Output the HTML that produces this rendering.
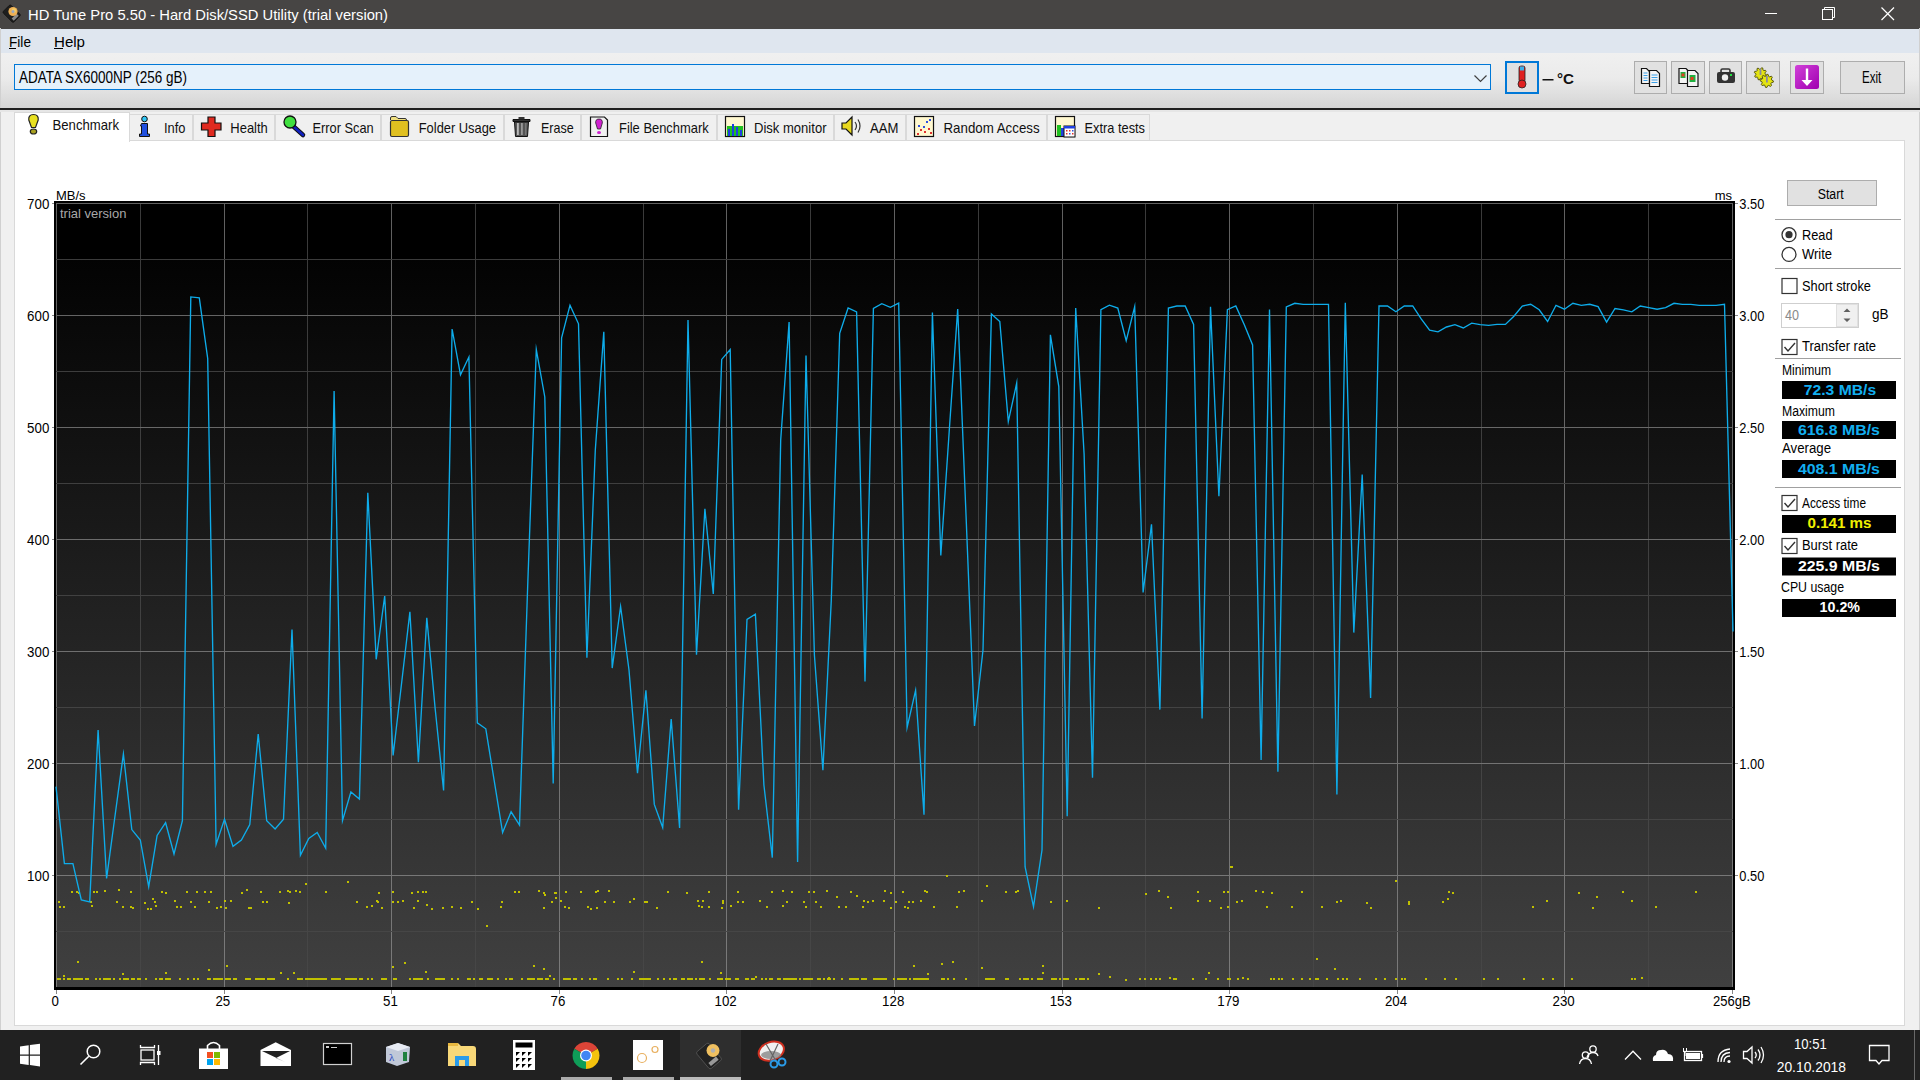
<!DOCTYPE html>
<html><head><meta charset="utf-8"><title>HD Tune Pro</title>
<style>html,body{margin:0;padding:0;width:1920px;height:1080px;overflow:hidden;background:#f0f0f0}svg{display:block;font-family:"Liberation Sans",sans-serif}</style>
</head><body>
<svg width="1920" height="1080" viewBox="0 0 1920 1080" font-family="Liberation Sans, sans-serif">
<rect x="0" y="0" width="1920" height="1080" fill="#f0f0f0"/>
<rect x="0" y="0" width="1920" height="29" fill="#474544"/>
<g transform="translate(12,14) rotate(-45)">
<rect x="-5.5" y="-8" width="11" height="15" rx="1.5" fill="#1e1e1e" stroke="#111" stroke-width="0.8"/>
<rect x="-3.5" y="3" width="7" height="3" fill="#8a8a8a"/>
</g>
<circle cx="13" cy="11.5" r="4.6" fill="#eeb055"/><circle cx="14" cy="10.5" r="2.2" fill="#f8e070" opacity="0.6"/><circle cx="13" cy="11.5" r="1.5" fill="#98a8c0"/>
<text x="28" y="20" font-size="15" fill="#fff" textLength="360" lengthAdjust="spacingAndGlyphs">HD Tune Pro 5.50 - Hard Disk/SSD Utility (trial version)</text>
<rect x="1765" y="13" width="12" height="1" fill="#fff"/>
<rect x="1822.5" y="9.5" width="10" height="10" fill="none" stroke="#fff" stroke-width="1"/>
<path d="M1824.5 9.5 V7.5 H1834.5 V17.5 H1832.5" fill="none" stroke="#fff" stroke-width="1"/>
<path d="M1881.5 7.5 L1894 20 M1894 7.5 L1881.5 20" stroke="#fff" stroke-width="1.2"/>
<rect x="0" y="29" width="1920" height="24" fill="#dfe6ef"/>
<text x="9" y="46.75" font-size="15" fill="#000" textLength="22" lengthAdjust="spacingAndGlyphs">File</text>
<rect x="9" y="48" width="7" height="1" fill="#000"/>
<text x="54" y="46.75" font-size="15" fill="#000" textLength="31" lengthAdjust="spacingAndGlyphs">Help</text>
<rect x="54" y="48" width="9" height="1" fill="#000"/>
<defs><linearGradient id="tg" x1="0" y1="0" x2="0" y2="1"><stop offset="0" stop-color="#f0f0f0"/><stop offset="0.45" stop-color="#ebebeb"/><stop offset="1" stop-color="#d4d4d4"/></linearGradient><linearGradient id="pg" x1="0" y1="0" x2="1" y2="1"><stop offset="0" stop-color="#d040d8"/><stop offset="1" stop-color="#a000b0"/></linearGradient></defs>
<rect x="0" y="53" width="1920" height="56" fill="url(#tg)"/>
<rect x="0" y="28" width="1" height="1002" fill="#d0d0d0"/><rect x="1919" y="28" width="1" height="1002" fill="#d0d0d0"/>
<rect x="0" y="108" width="1920" height="2" fill="#202020"/>
<rect x="0" y="110" width="1920" height="2" fill="#e6e6e6"/>
<rect x="14.5" y="64.5" width="1476" height="25" fill="#e5f1fb" stroke="#0078d7" stroke-width="1"/>
<text x="19" y="82.7" font-size="16" fill="#000" textLength="168" lengthAdjust="spacingAndGlyphs">ADATA SX6000NP (256 gB)</text>
<path d="M1474.5 75.5 L1480.5 81.5 L1486.5 75.5" fill="none" stroke="#404040" stroke-width="1.2"/>
<rect x="1506" y="62" width="32" height="31" fill="#e1e1e1" stroke="#0078d7" stroke-width="2"/>
<rect x="1519" y="66" width="6" height="16" rx="2" fill="#e02020" stroke="#222" stroke-width="0.8"/>
<rect x="1520" y="66.5" width="4" height="4" fill="#40b0e8"/>
<circle cx="1522" cy="84" r="4" fill="#e02020" stroke="#222" stroke-width="0.8"/>
<rect x="1542.5" y="79" width="11" height="1.5" fill="#111"/>
<text x="1557" y="83.6" font-size="15" fill="#111" textLength="17" lengthAdjust="spacingAndGlyphs" font-weight="bold">°C</text>
<rect x="1634.5" y="61.5" width="32" height="32" fill="#e1e1e1" stroke="#adadad" stroke-width="1"/>
<rect x="1671.5" y="61.5" width="33" height="32" fill="#e1e1e1" stroke="#adadad" stroke-width="1"/>
<rect x="1709.5" y="61.5" width="32" height="32" fill="#e1e1e1" stroke="#adadad" stroke-width="1"/>
<rect x="1746.5" y="61.5" width="33" height="32" fill="#e1e1e1" stroke="#adadad" stroke-width="1"/>
<rect x="1790.5" y="61.5" width="33" height="32" fill="#e1e1e1" stroke="#adadad" stroke-width="1"/>
<rect x="1840.5" y="61.5" width="64" height="32" fill="#e1e1e1" stroke="#adadad" stroke-width="1"/>
<path d="M1641.5 68.5 H1646.5 L1649.5 71.5 V83.5 H1641.5 Z" fill="#f4f4f4" stroke="#111" stroke-width="1.2"/>
<rect x="1643.5" y="72.5" width="4" height="1" fill="#3aa0e8"/>
<rect x="1643.5" y="75.0" width="4" height="1" fill="#3aa0e8"/>
<rect x="1643.5" y="77.5" width="4" height="1" fill="#3aa0e8"/>
<rect x="1643.5" y="80.0" width="4" height="1" fill="#3aa0e8"/>
<path d="M1649.5 70.5 H1656.5 L1659.5 73.5 V86.5 H1649.5 Z" fill="#f4f4f4" stroke="#111" stroke-width="1.2"/>
<rect x="1651.5" y="74.5" width="6" height="1" fill="#3aa0e8"/>
<rect x="1651.5" y="77.0" width="6" height="1" fill="#3aa0e8"/>
<rect x="1651.5" y="79.5" width="6" height="1" fill="#3aa0e8"/>
<rect x="1651.5" y="82.0" width="6" height="1" fill="#3aa0e8"/>
<path d="M1679 68.5 H1686 L1688 70.5 V83.5 H1679 Z" fill="#f4f4f4" stroke="#111" stroke-width="1.2"/>
<rect x="1680.5" y="72" width="5" height="6" fill="#20b040"/><rect x="1681.5" y="73.5" width="3" height="3" fill="#e04020"/>
<path d="M1687.5 70.5 H1695 L1698 73.5 V86.5 H1687.5 Z" fill="#f4f4f4" stroke="#111" stroke-width="1.2"/>
<rect x="1689.5" y="75" width="6" height="7" fill="#20b040"/><rect x="1690.5" y="77" width="3" height="3" fill="#e04020"/>
<rect x="1717" y="72" width="18" height="11" rx="2" fill="#333"/>
<rect x="1721" y="69" width="9" height="4" rx="1.5" fill="none" stroke="#333" stroke-width="1.6"/>
<circle cx="1725" cy="77.5" r="3.2" fill="#f0f0f0"/><rect x="1730" y="74" width="2" height="2" fill="#20e040"/>
<path d="M1766.48,75.03 L1766.12,76.19 L1764.22,76.37 L1763.64,77.06 L1763.83,78.97 L1762.75,79.54 L1761.28,78.31 L1760.38,78.40 L1759.17,79.88 L1758.01,79.52 L1757.83,77.62 L1757.14,77.04 L1755.23,77.23 L1754.66,76.15 L1755.89,74.68 L1755.80,73.78 L1754.32,72.57 L1754.68,71.41 L1756.58,71.23 L1757.16,70.54 L1756.97,68.63 L1758.05,68.06 L1759.52,69.29 L1760.42,69.20 L1761.63,67.72 L1762.79,68.08 L1762.97,69.98 L1763.66,70.56 L1765.57,70.37 L1766.14,71.45 L1764.91,72.92 L1765.00,73.82 Z" fill="#e4e410" stroke="#5a5a10" stroke-width="1"/>
<path d="M1773.40,80.90 L1773.27,82.19 L1771.33,82.78 L1770.87,83.62 L1771.47,85.57 L1770.47,86.39 L1768.68,85.43 L1767.76,85.71 L1766.80,87.50 L1765.51,87.37 L1764.92,85.43 L1764.08,84.97 L1762.13,85.57 L1761.31,84.57 L1762.27,82.78 L1761.99,81.86 L1760.20,80.90 L1760.33,79.61 L1762.27,79.02 L1762.73,78.18 L1762.13,76.23 L1763.13,75.41 L1764.92,76.37 L1765.84,76.09 L1766.80,74.30 L1768.09,74.43 L1768.68,76.37 L1769.52,76.83 L1771.47,76.23 L1772.29,77.23 L1771.33,79.02 L1771.61,79.94 Z" fill="#e4e410" stroke="#5a5a10" stroke-width="1"/>
<rect x="1759.6" y="68.5" width="1.8" height="6.5" fill="#8a8aa0"/><rect x="1766" y="76" width="1.8" height="6.5" fill="#8a8aa0"/>
<rect x="1795" y="65" width="24" height="24" rx="2.5" fill="url(#pg)"/>
<path d="M1805.8 68.5 H1808.2 V80 H1812.5 L1807 86 L1801.5 80 H1805.8 Z" fill="#fff"/>
<text x="1862" y="83" font-size="16" fill="#000" textLength="19.3" lengthAdjust="spacingAndGlyphs">Exit</text>
<rect x="14.5" y="140.5" width="1890" height="885" fill="#fff" stroke="#d9d9d9" stroke-width="1"/>
<rect x="129.5" y="114.5" width="63" height="26" fill="#f0f0f0" stroke="#d9d9d9" stroke-width="1"/>
<rect x="193.5" y="114.5" width="81" height="26" fill="#f0f0f0" stroke="#d9d9d9" stroke-width="1"/>
<rect x="275.5" y="114.5" width="105" height="26" fill="#f0f0f0" stroke="#d9d9d9" stroke-width="1"/>
<rect x="381.5" y="114.5" width="122" height="26" fill="#f0f0f0" stroke="#d9d9d9" stroke-width="1"/>
<rect x="504.5" y="114.5" width="76" height="26" fill="#f0f0f0" stroke="#d9d9d9" stroke-width="1"/>
<rect x="581.5" y="114.5" width="135" height="26" fill="#f0f0f0" stroke="#d9d9d9" stroke-width="1"/>
<rect x="717.5" y="114.5" width="116" height="26" fill="#f0f0f0" stroke="#d9d9d9" stroke-width="1"/>
<rect x="834.5" y="114.5" width="71" height="26" fill="#f0f0f0" stroke="#d9d9d9" stroke-width="1"/>
<rect x="906.5" y="114.5" width="140" height="26" fill="#f0f0f0" stroke="#d9d9d9" stroke-width="1"/>
<rect x="1047.5" y="114.5" width="102" height="26" fill="#f0f0f0" stroke="#d9d9d9" stroke-width="1"/>
<rect x="14.5" y="112.5" width="115" height="29" fill="#fff" stroke="#d9d9d9" stroke-width="1"/>
<rect x="15" y="138" width="114" height="4" fill="#fff"/>
<text x="52.5" y="129.7" font-size="14.5" fill="#101010" textLength="66.5" lengthAdjust="spacingAndGlyphs">Benchmark</text>
<text x="164" y="132.5" font-size="14.5" fill="#101010" textLength="21.5" lengthAdjust="spacingAndGlyphs">Info</text>
<text x="230.3" y="132.5" font-size="14.5" fill="#101010" textLength="37.5" lengthAdjust="spacingAndGlyphs">Health</text>
<text x="312.5" y="132.5" font-size="14.5" fill="#101010" textLength="61.25" lengthAdjust="spacingAndGlyphs">Error Scan</text>
<text x="418.75" y="132.5" font-size="14.5" fill="#101010" textLength="77.25" lengthAdjust="spacingAndGlyphs">Folder Usage</text>
<text x="541" y="132.5" font-size="14.5" fill="#101010" textLength="32.75" lengthAdjust="spacingAndGlyphs">Erase</text>
<text x="619" y="132.5" font-size="14.5" fill="#101010" textLength="89.7" lengthAdjust="spacingAndGlyphs">File Benchmark</text>
<text x="754" y="132.5" font-size="14.5" fill="#101010" textLength="72.5" lengthAdjust="spacingAndGlyphs">Disk monitor</text>
<text x="870" y="132.5" font-size="14.5" fill="#101010" textLength="28.4" lengthAdjust="spacingAndGlyphs">AAM</text>
<text x="943.5" y="132.5" font-size="14.5" fill="#101010" textLength="96.1" lengthAdjust="spacingAndGlyphs">Random Access</text>
<text x="1084.6" y="132.5" font-size="14.5" fill="#101010" textLength="60.4" lengthAdjust="spacingAndGlyphs">Extra tests</text>

<path d="M33.5 114.5 C29.5 114.5 28.5 117 28.8 120 L31.5 127.5 H35.5 L38.2 120 C38.5 117 37.5 114.5 33.5 114.5 Z" fill="#e8e020" stroke="#222" stroke-width="1.2"/>
<ellipse cx="33.5" cy="131.5" rx="3.2" ry="2.5" fill="#a8a020" stroke="#222" stroke-width="1.2"/>
<circle cx="144.5" cy="119" r="2.8" fill="#30c8f8" stroke="#111" stroke-width="1"/>
<path d="M141.5 123.5 H147.5 V134 H149.5 V136.5 H139.5 V134 H141.5 V126 H140.5 Z" fill="#2050e0" stroke="#111" stroke-width="1"/>
<path d="M208 117 H215 V123 H221 V130 H215 V136.5 H208 V130 H201.5 V123 H208 Z" fill="#e02a20" stroke="#111" stroke-width="1.2"/>
<path d="M293 126 L303 135" stroke="#111" stroke-width="4.5" stroke-linecap="round"/>
<path d="M293 126 L303 135" stroke="#1020c0" stroke-width="2.6" stroke-linecap="round"/>
<circle cx="290" cy="122" r="6" fill="#40e040" stroke="#111" stroke-width="1.3"/>
<path d="M390.5 120 V118 Q390.5 116.5 392 116.5 H396 L398 118.5 H405 Q406.5 118.5 406.5 120 V121" fill="#f0e080" stroke="#333" stroke-width="1"/>
<rect x="390.5" y="120.5" width="18" height="16" rx="1.5" fill="#e0c020" stroke="#333" stroke-width="1.2"/>
<path d="M513 119.5 H530 V121.5 H513 Z" fill="#333" stroke="#111" stroke-width="1"/>
<rect x="518.5" y="117" width="6" height="2.5" fill="#333"/>
<path d="M514.5 122 H528.5 L527.5 136.5 H515.5 Z" fill="#555" stroke="#111" stroke-width="1"/>
<rect x="517" y="123" width="1.8" height="12" fill="#bbb"/><rect x="521" y="123" width="1.8" height="12" fill="#999"/><rect x="525" y="123" width="1.5" height="12" fill="#777"/>
<path d="M590.5 117 H604.5 L607.5 120 V136.5 H590.5 Z" fill="#f0f0f0" stroke="#111" stroke-width="1.2"/>
<path d="M599 119 C596 119 595.5 121 595.7 123 L597.5 129 H600.5 L602.3 123 C602.5 121 602 119 599 119 Z" fill="#d020d0" stroke="#222" stroke-width="0.8"/>
<ellipse cx="599" cy="132.5" rx="2" ry="1.6" fill="#d020d0"/>
<rect x="725.5" y="116.5" width="19" height="20" fill="#fff8d0" stroke="#111" stroke-width="1.2"/>
<rect x="727" y="126" width="16" height="10" fill="#20c020"/>
<rect x="728" y="129" width="2" height="7" fill="#2040e0"/><rect x="732" y="124" width="2" height="12" fill="#2040e0"/><rect x="736" y="127" width="2" height="9" fill="#2040e0"/><rect x="740" y="130" width="2" height="6" fill="#2040e0"/>
<path d="M842 123 H846 L852 117 V135 L846 129 H842 Z" fill="#e8d820" stroke="#111" stroke-width="1.2"/>
<path d="M855 122 Q858 126 855 130 M858 119.5 Q862 126 858 132.5" fill="none" stroke="#333" stroke-width="1.2"/>
<rect x="914.5" y="116.5" width="19" height="20" fill="#fff8d0" stroke="#111" stroke-width="1.2"/>
<g fill="#e03030"><rect x="917" y="133" width="2" height="2"/><rect x="920" y="129" width="2" height="2"/><rect x="924" y="131" width="2" height="2"/><rect x="928" y="128" width="2" height="2"/><rect x="930" y="132" width="2" height="2"/></g>
<g fill="#3050e0"><rect x="918" y="125" width="2" height="2"/><rect x="923" y="126" width="2" height="2"/><rect x="926" y="121" width="2" height="2"/><rect x="929" y="119" width="2" height="2"/></g>
<rect x="1055.5" y="116.5" width="19" height="20" fill="#fff8d0" stroke="#111" stroke-width="1.2"/>
<rect x="1057" y="125" width="4" height="11" fill="#20c020"/><rect x="1061" y="128" width="3" height="8" fill="#2040e0"/>
<rect x="1064" y="126" width="11" height="11" fill="#fff" stroke="#111" stroke-width="1"/>
<rect x="1064" y="126" width="11" height="2.5" fill="#2040e0"/>
<g fill="#e03030"><rect x="1066" y="130" width="1.5" height="1.5"/><rect x="1069" y="130" width="1.5" height="1.5"/><rect x="1072" y="133" width="1.5" height="1.5"/><rect x="1066" y="133" width="1.5" height="1.5"/></g>
<g fill="#3050e0"><rect x="1072" y="130" width="1.5" height="1.5"/><rect x="1069" y="133" width="1.5" height="1.5"/></g>

<rect x="54" y="201" width="1681" height="789" fill="#000"/>
<defs><linearGradient id="b0" x1="0" y1="0" x2="0" y2="1"><stop offset="0" stop-color="rgb(0,0,0)"/><stop offset="1" stop-color="rgb(0,0,0)"/></linearGradient><linearGradient id="b1" x1="0" y1="0" x2="0" y2="1"><stop offset="0" stop-color="rgb(3,3,3)"/><stop offset="1" stop-color="rgb(7,7,7)"/></linearGradient><linearGradient id="b2" x1="0" y1="0" x2="0" y2="1"><stop offset="0" stop-color="rgb(8,8,8)"/><stop offset="1" stop-color="rgb(12,12,12)"/></linearGradient><linearGradient id="b3" x1="0" y1="0" x2="0" y2="1"><stop offset="0" stop-color="rgb(12,12,12)"/><stop offset="1" stop-color="rgb(16,16,16)"/></linearGradient><linearGradient id="b4" x1="0" y1="0" x2="0" y2="1"><stop offset="0" stop-color="rgb(17,17,17)"/><stop offset="1" stop-color="rgb(21,21,21)"/></linearGradient><linearGradient id="b5" x1="0" y1="0" x2="0" y2="1"><stop offset="0" stop-color="rgb(22,22,22)"/><stop offset="1" stop-color="rgb(26,26,26)"/></linearGradient><linearGradient id="b6" x1="0" y1="0" x2="0" y2="1"><stop offset="0" stop-color="rgb(27,27,27)"/><stop offset="1" stop-color="rgb(31,31,31)"/></linearGradient><linearGradient id="b7" x1="0" y1="0" x2="0" y2="1"><stop offset="0" stop-color="rgb(32,32,32)"/><stop offset="1" stop-color="rgb(36,36,36)"/></linearGradient><linearGradient id="b8" x1="0" y1="0" x2="0" y2="1"><stop offset="0" stop-color="rgb(36,36,36)"/><stop offset="1" stop-color="rgb(40,40,40)"/></linearGradient><linearGradient id="b9" x1="0" y1="0" x2="0" y2="1"><stop offset="0" stop-color="rgb(41,41,41)"/><stop offset="1" stop-color="rgb(45,45,45)"/></linearGradient><linearGradient id="b10" x1="0" y1="0" x2="0" y2="1"><stop offset="0" stop-color="rgb(46,46,46)"/><stop offset="1" stop-color="rgb(50,50,50)"/></linearGradient><linearGradient id="b11" x1="0" y1="0" x2="0" y2="1"><stop offset="0" stop-color="rgb(51,51,51)"/><stop offset="1" stop-color="rgb(55,55,55)"/></linearGradient><linearGradient id="b12" x1="0" y1="0" x2="0" y2="1"><stop offset="0" stop-color="rgb(56,56,56)"/><stop offset="1" stop-color="rgb(60,60,60)"/></linearGradient><linearGradient id="b13" x1="0" y1="0" x2="0" y2="1"><stop offset="0" stop-color="rgb(60,60,60)"/><stop offset="1" stop-color="rgb(64,64,64)"/></linearGradient></defs>
<rect x="56" y="203" width="1677" height="56" fill="url(#b0)"/>
<rect x="56" y="259" width="1677" height="56" fill="url(#b1)"/>
<rect x="56" y="315" width="1677" height="56" fill="url(#b2)"/>
<rect x="56" y="371" width="1677" height="56" fill="url(#b3)"/>
<rect x="56" y="427" width="1677" height="56" fill="url(#b4)"/>
<rect x="56" y="483" width="1677" height="56" fill="url(#b5)"/>
<rect x="56" y="539" width="1677" height="56" fill="url(#b6)"/>
<rect x="56" y="595" width="1677" height="56" fill="url(#b7)"/>
<rect x="56" y="651" width="1677" height="56" fill="url(#b8)"/>
<rect x="56" y="707" width="1677" height="56" fill="url(#b9)"/>
<rect x="56" y="763" width="1677" height="56" fill="url(#b10)"/>
<rect x="56" y="819" width="1677" height="56" fill="url(#b11)"/>
<rect x="56" y="875" width="1677" height="56" fill="url(#b12)"/>
<rect x="56" y="931" width="1677" height="56" fill="url(#b13)"/>
<rect x="56" y="203" width="1" height="56" fill="rgb(96,96,96)"/><rect x="56" y="259" width="1" height="56" fill="rgb(98,98,98)"/><rect x="56" y="315" width="1" height="56" fill="rgb(100,100,100)"/><rect x="56" y="371" width="1" height="56" fill="rgb(102,102,102)"/><rect x="56" y="427" width="1" height="56" fill="rgb(104,104,104)"/><rect x="56" y="483" width="1" height="56" fill="rgb(106,106,106)"/><rect x="56" y="539" width="1" height="56" fill="rgb(108,108,108)"/><rect x="56" y="595" width="1" height="56" fill="rgb(110,110,110)"/><rect x="56" y="651" width="1" height="56" fill="rgb(111,111,111)"/><rect x="56" y="707" width="1" height="56" fill="rgb(113,113,113)"/><rect x="56" y="763" width="1" height="56" fill="rgb(115,115,115)"/><rect x="56" y="819" width="1" height="56" fill="rgb(117,117,117)"/><rect x="56" y="875" width="1" height="56" fill="rgb(119,119,119)"/><rect x="56" y="931" width="1" height="56" fill="rgb(121,121,121)"/><rect x="140" y="203" width="1" height="56" fill="rgb(58,58,58)"/><rect x="140" y="259" width="1" height="56" fill="rgb(59,59,59)"/><rect x="140" y="315" width="1" height="56" fill="rgb(60,60,60)"/><rect x="140" y="371" width="1" height="56" fill="rgb(61,61,61)"/><rect x="140" y="427" width="1" height="56" fill="rgb(62,62,62)"/><rect x="140" y="483" width="1" height="56" fill="rgb(63,63,63)"/><rect x="140" y="539" width="1" height="56" fill="rgb(64,64,64)"/><rect x="140" y="595" width="1" height="56" fill="rgb(65,65,65)"/><rect x="140" y="651" width="1" height="56" fill="rgb(66,66,66)"/><rect x="140" y="707" width="1" height="56" fill="rgb(67,67,67)"/><rect x="140" y="763" width="1" height="56" fill="rgb(68,68,68)"/><rect x="140" y="819" width="1" height="56" fill="rgb(69,69,69)"/><rect x="140" y="875" width="1" height="56" fill="rgb(70,70,70)"/><rect x="140" y="931" width="1" height="56" fill="rgb(70,70,70)"/><rect x="224" y="203" width="1" height="56" fill="rgb(96,96,96)"/><rect x="224" y="259" width="1" height="56" fill="rgb(98,98,98)"/><rect x="224" y="315" width="1" height="56" fill="rgb(100,100,100)"/><rect x="224" y="371" width="1" height="56" fill="rgb(102,102,102)"/><rect x="224" y="427" width="1" height="56" fill="rgb(104,104,104)"/><rect x="224" y="483" width="1" height="56" fill="rgb(106,106,106)"/><rect x="224" y="539" width="1" height="56" fill="rgb(108,108,108)"/><rect x="224" y="595" width="1" height="56" fill="rgb(110,110,110)"/><rect x="224" y="651" width="1" height="56" fill="rgb(111,111,111)"/><rect x="224" y="707" width="1" height="56" fill="rgb(113,113,113)"/><rect x="224" y="763" width="1" height="56" fill="rgb(115,115,115)"/><rect x="224" y="819" width="1" height="56" fill="rgb(117,117,117)"/><rect x="224" y="875" width="1" height="56" fill="rgb(119,119,119)"/><rect x="224" y="931" width="1" height="56" fill="rgb(121,121,121)"/><rect x="307" y="203" width="1" height="56" fill="rgb(58,58,58)"/><rect x="307" y="259" width="1" height="56" fill="rgb(59,59,59)"/><rect x="307" y="315" width="1" height="56" fill="rgb(60,60,60)"/><rect x="307" y="371" width="1" height="56" fill="rgb(61,61,61)"/><rect x="307" y="427" width="1" height="56" fill="rgb(62,62,62)"/><rect x="307" y="483" width="1" height="56" fill="rgb(63,63,63)"/><rect x="307" y="539" width="1" height="56" fill="rgb(64,64,64)"/><rect x="307" y="595" width="1" height="56" fill="rgb(65,65,65)"/><rect x="307" y="651" width="1" height="56" fill="rgb(66,66,66)"/><rect x="307" y="707" width="1" height="56" fill="rgb(67,67,67)"/><rect x="307" y="763" width="1" height="56" fill="rgb(68,68,68)"/><rect x="307" y="819" width="1" height="56" fill="rgb(69,69,69)"/><rect x="307" y="875" width="1" height="56" fill="rgb(70,70,70)"/><rect x="307" y="931" width="1" height="56" fill="rgb(70,70,70)"/><rect x="391" y="203" width="1" height="56" fill="rgb(96,96,96)"/><rect x="391" y="259" width="1" height="56" fill="rgb(98,98,98)"/><rect x="391" y="315" width="1" height="56" fill="rgb(100,100,100)"/><rect x="391" y="371" width="1" height="56" fill="rgb(102,102,102)"/><rect x="391" y="427" width="1" height="56" fill="rgb(104,104,104)"/><rect x="391" y="483" width="1" height="56" fill="rgb(106,106,106)"/><rect x="391" y="539" width="1" height="56" fill="rgb(108,108,108)"/><rect x="391" y="595" width="1" height="56" fill="rgb(110,110,110)"/><rect x="391" y="651" width="1" height="56" fill="rgb(111,111,111)"/><rect x="391" y="707" width="1" height="56" fill="rgb(113,113,113)"/><rect x="391" y="763" width="1" height="56" fill="rgb(115,115,115)"/><rect x="391" y="819" width="1" height="56" fill="rgb(117,117,117)"/><rect x="391" y="875" width="1" height="56" fill="rgb(119,119,119)"/><rect x="391" y="931" width="1" height="56" fill="rgb(121,121,121)"/><rect x="475" y="203" width="1" height="56" fill="rgb(58,58,58)"/><rect x="475" y="259" width="1" height="56" fill="rgb(59,59,59)"/><rect x="475" y="315" width="1" height="56" fill="rgb(60,60,60)"/><rect x="475" y="371" width="1" height="56" fill="rgb(61,61,61)"/><rect x="475" y="427" width="1" height="56" fill="rgb(62,62,62)"/><rect x="475" y="483" width="1" height="56" fill="rgb(63,63,63)"/><rect x="475" y="539" width="1" height="56" fill="rgb(64,64,64)"/><rect x="475" y="595" width="1" height="56" fill="rgb(65,65,65)"/><rect x="475" y="651" width="1" height="56" fill="rgb(66,66,66)"/><rect x="475" y="707" width="1" height="56" fill="rgb(67,67,67)"/><rect x="475" y="763" width="1" height="56" fill="rgb(68,68,68)"/><rect x="475" y="819" width="1" height="56" fill="rgb(69,69,69)"/><rect x="475" y="875" width="1" height="56" fill="rgb(70,70,70)"/><rect x="475" y="931" width="1" height="56" fill="rgb(70,70,70)"/><rect x="559" y="203" width="1" height="56" fill="rgb(96,96,96)"/><rect x="559" y="259" width="1" height="56" fill="rgb(98,98,98)"/><rect x="559" y="315" width="1" height="56" fill="rgb(100,100,100)"/><rect x="559" y="371" width="1" height="56" fill="rgb(102,102,102)"/><rect x="559" y="427" width="1" height="56" fill="rgb(104,104,104)"/><rect x="559" y="483" width="1" height="56" fill="rgb(106,106,106)"/><rect x="559" y="539" width="1" height="56" fill="rgb(108,108,108)"/><rect x="559" y="595" width="1" height="56" fill="rgb(110,110,110)"/><rect x="559" y="651" width="1" height="56" fill="rgb(111,111,111)"/><rect x="559" y="707" width="1" height="56" fill="rgb(113,113,113)"/><rect x="559" y="763" width="1" height="56" fill="rgb(115,115,115)"/><rect x="559" y="819" width="1" height="56" fill="rgb(117,117,117)"/><rect x="559" y="875" width="1" height="56" fill="rgb(119,119,119)"/><rect x="559" y="931" width="1" height="56" fill="rgb(121,121,121)"/><rect x="643" y="203" width="1" height="56" fill="rgb(58,58,58)"/><rect x="643" y="259" width="1" height="56" fill="rgb(59,59,59)"/><rect x="643" y="315" width="1" height="56" fill="rgb(60,60,60)"/><rect x="643" y="371" width="1" height="56" fill="rgb(61,61,61)"/><rect x="643" y="427" width="1" height="56" fill="rgb(62,62,62)"/><rect x="643" y="483" width="1" height="56" fill="rgb(63,63,63)"/><rect x="643" y="539" width="1" height="56" fill="rgb(64,64,64)"/><rect x="643" y="595" width="1" height="56" fill="rgb(65,65,65)"/><rect x="643" y="651" width="1" height="56" fill="rgb(66,66,66)"/><rect x="643" y="707" width="1" height="56" fill="rgb(67,67,67)"/><rect x="643" y="763" width="1" height="56" fill="rgb(68,68,68)"/><rect x="643" y="819" width="1" height="56" fill="rgb(69,69,69)"/><rect x="643" y="875" width="1" height="56" fill="rgb(70,70,70)"/><rect x="643" y="931" width="1" height="56" fill="rgb(70,70,70)"/><rect x="726" y="203" width="1" height="56" fill="rgb(96,96,96)"/><rect x="726" y="259" width="1" height="56" fill="rgb(98,98,98)"/><rect x="726" y="315" width="1" height="56" fill="rgb(100,100,100)"/><rect x="726" y="371" width="1" height="56" fill="rgb(102,102,102)"/><rect x="726" y="427" width="1" height="56" fill="rgb(104,104,104)"/><rect x="726" y="483" width="1" height="56" fill="rgb(106,106,106)"/><rect x="726" y="539" width="1" height="56" fill="rgb(108,108,108)"/><rect x="726" y="595" width="1" height="56" fill="rgb(110,110,110)"/><rect x="726" y="651" width="1" height="56" fill="rgb(111,111,111)"/><rect x="726" y="707" width="1" height="56" fill="rgb(113,113,113)"/><rect x="726" y="763" width="1" height="56" fill="rgb(115,115,115)"/><rect x="726" y="819" width="1" height="56" fill="rgb(117,117,117)"/><rect x="726" y="875" width="1" height="56" fill="rgb(119,119,119)"/><rect x="726" y="931" width="1" height="56" fill="rgb(121,121,121)"/><rect x="810" y="203" width="1" height="56" fill="rgb(58,58,58)"/><rect x="810" y="259" width="1" height="56" fill="rgb(59,59,59)"/><rect x="810" y="315" width="1" height="56" fill="rgb(60,60,60)"/><rect x="810" y="371" width="1" height="56" fill="rgb(61,61,61)"/><rect x="810" y="427" width="1" height="56" fill="rgb(62,62,62)"/><rect x="810" y="483" width="1" height="56" fill="rgb(63,63,63)"/><rect x="810" y="539" width="1" height="56" fill="rgb(64,64,64)"/><rect x="810" y="595" width="1" height="56" fill="rgb(65,65,65)"/><rect x="810" y="651" width="1" height="56" fill="rgb(66,66,66)"/><rect x="810" y="707" width="1" height="56" fill="rgb(67,67,67)"/><rect x="810" y="763" width="1" height="56" fill="rgb(68,68,68)"/><rect x="810" y="819" width="1" height="56" fill="rgb(69,69,69)"/><rect x="810" y="875" width="1" height="56" fill="rgb(70,70,70)"/><rect x="810" y="931" width="1" height="56" fill="rgb(70,70,70)"/><rect x="894" y="203" width="1" height="56" fill="rgb(96,96,96)"/><rect x="894" y="259" width="1" height="56" fill="rgb(98,98,98)"/><rect x="894" y="315" width="1" height="56" fill="rgb(100,100,100)"/><rect x="894" y="371" width="1" height="56" fill="rgb(102,102,102)"/><rect x="894" y="427" width="1" height="56" fill="rgb(104,104,104)"/><rect x="894" y="483" width="1" height="56" fill="rgb(106,106,106)"/><rect x="894" y="539" width="1" height="56" fill="rgb(108,108,108)"/><rect x="894" y="595" width="1" height="56" fill="rgb(110,110,110)"/><rect x="894" y="651" width="1" height="56" fill="rgb(111,111,111)"/><rect x="894" y="707" width="1" height="56" fill="rgb(113,113,113)"/><rect x="894" y="763" width="1" height="56" fill="rgb(115,115,115)"/><rect x="894" y="819" width="1" height="56" fill="rgb(117,117,117)"/><rect x="894" y="875" width="1" height="56" fill="rgb(119,119,119)"/><rect x="894" y="931" width="1" height="56" fill="rgb(121,121,121)"/><rect x="978" y="203" width="1" height="56" fill="rgb(58,58,58)"/><rect x="978" y="259" width="1" height="56" fill="rgb(59,59,59)"/><rect x="978" y="315" width="1" height="56" fill="rgb(60,60,60)"/><rect x="978" y="371" width="1" height="56" fill="rgb(61,61,61)"/><rect x="978" y="427" width="1" height="56" fill="rgb(62,62,62)"/><rect x="978" y="483" width="1" height="56" fill="rgb(63,63,63)"/><rect x="978" y="539" width="1" height="56" fill="rgb(64,64,64)"/><rect x="978" y="595" width="1" height="56" fill="rgb(65,65,65)"/><rect x="978" y="651" width="1" height="56" fill="rgb(66,66,66)"/><rect x="978" y="707" width="1" height="56" fill="rgb(67,67,67)"/><rect x="978" y="763" width="1" height="56" fill="rgb(68,68,68)"/><rect x="978" y="819" width="1" height="56" fill="rgb(69,69,69)"/><rect x="978" y="875" width="1" height="56" fill="rgb(70,70,70)"/><rect x="978" y="931" width="1" height="56" fill="rgb(70,70,70)"/><rect x="1062" y="203" width="1" height="56" fill="rgb(96,96,96)"/><rect x="1062" y="259" width="1" height="56" fill="rgb(98,98,98)"/><rect x="1062" y="315" width="1" height="56" fill="rgb(100,100,100)"/><rect x="1062" y="371" width="1" height="56" fill="rgb(102,102,102)"/><rect x="1062" y="427" width="1" height="56" fill="rgb(104,104,104)"/><rect x="1062" y="483" width="1" height="56" fill="rgb(106,106,106)"/><rect x="1062" y="539" width="1" height="56" fill="rgb(108,108,108)"/><rect x="1062" y="595" width="1" height="56" fill="rgb(110,110,110)"/><rect x="1062" y="651" width="1" height="56" fill="rgb(111,111,111)"/><rect x="1062" y="707" width="1" height="56" fill="rgb(113,113,113)"/><rect x="1062" y="763" width="1" height="56" fill="rgb(115,115,115)"/><rect x="1062" y="819" width="1" height="56" fill="rgb(117,117,117)"/><rect x="1062" y="875" width="1" height="56" fill="rgb(119,119,119)"/><rect x="1062" y="931" width="1" height="56" fill="rgb(121,121,121)"/><rect x="1145" y="203" width="1" height="56" fill="rgb(58,58,58)"/><rect x="1145" y="259" width="1" height="56" fill="rgb(59,59,59)"/><rect x="1145" y="315" width="1" height="56" fill="rgb(60,60,60)"/><rect x="1145" y="371" width="1" height="56" fill="rgb(61,61,61)"/><rect x="1145" y="427" width="1" height="56" fill="rgb(62,62,62)"/><rect x="1145" y="483" width="1" height="56" fill="rgb(63,63,63)"/><rect x="1145" y="539" width="1" height="56" fill="rgb(64,64,64)"/><rect x="1145" y="595" width="1" height="56" fill="rgb(65,65,65)"/><rect x="1145" y="651" width="1" height="56" fill="rgb(66,66,66)"/><rect x="1145" y="707" width="1" height="56" fill="rgb(67,67,67)"/><rect x="1145" y="763" width="1" height="56" fill="rgb(68,68,68)"/><rect x="1145" y="819" width="1" height="56" fill="rgb(69,69,69)"/><rect x="1145" y="875" width="1" height="56" fill="rgb(70,70,70)"/><rect x="1145" y="931" width="1" height="56" fill="rgb(70,70,70)"/><rect x="1229" y="203" width="1" height="56" fill="rgb(96,96,96)"/><rect x="1229" y="259" width="1" height="56" fill="rgb(98,98,98)"/><rect x="1229" y="315" width="1" height="56" fill="rgb(100,100,100)"/><rect x="1229" y="371" width="1" height="56" fill="rgb(102,102,102)"/><rect x="1229" y="427" width="1" height="56" fill="rgb(104,104,104)"/><rect x="1229" y="483" width="1" height="56" fill="rgb(106,106,106)"/><rect x="1229" y="539" width="1" height="56" fill="rgb(108,108,108)"/><rect x="1229" y="595" width="1" height="56" fill="rgb(110,110,110)"/><rect x="1229" y="651" width="1" height="56" fill="rgb(111,111,111)"/><rect x="1229" y="707" width="1" height="56" fill="rgb(113,113,113)"/><rect x="1229" y="763" width="1" height="56" fill="rgb(115,115,115)"/><rect x="1229" y="819" width="1" height="56" fill="rgb(117,117,117)"/><rect x="1229" y="875" width="1" height="56" fill="rgb(119,119,119)"/><rect x="1229" y="931" width="1" height="56" fill="rgb(121,121,121)"/><rect x="1313" y="203" width="1" height="56" fill="rgb(58,58,58)"/><rect x="1313" y="259" width="1" height="56" fill="rgb(59,59,59)"/><rect x="1313" y="315" width="1" height="56" fill="rgb(60,60,60)"/><rect x="1313" y="371" width="1" height="56" fill="rgb(61,61,61)"/><rect x="1313" y="427" width="1" height="56" fill="rgb(62,62,62)"/><rect x="1313" y="483" width="1" height="56" fill="rgb(63,63,63)"/><rect x="1313" y="539" width="1" height="56" fill="rgb(64,64,64)"/><rect x="1313" y="595" width="1" height="56" fill="rgb(65,65,65)"/><rect x="1313" y="651" width="1" height="56" fill="rgb(66,66,66)"/><rect x="1313" y="707" width="1" height="56" fill="rgb(67,67,67)"/><rect x="1313" y="763" width="1" height="56" fill="rgb(68,68,68)"/><rect x="1313" y="819" width="1" height="56" fill="rgb(69,69,69)"/><rect x="1313" y="875" width="1" height="56" fill="rgb(70,70,70)"/><rect x="1313" y="931" width="1" height="56" fill="rgb(70,70,70)"/><rect x="1397" y="203" width="1" height="56" fill="rgb(96,96,96)"/><rect x="1397" y="259" width="1" height="56" fill="rgb(98,98,98)"/><rect x="1397" y="315" width="1" height="56" fill="rgb(100,100,100)"/><rect x="1397" y="371" width="1" height="56" fill="rgb(102,102,102)"/><rect x="1397" y="427" width="1" height="56" fill="rgb(104,104,104)"/><rect x="1397" y="483" width="1" height="56" fill="rgb(106,106,106)"/><rect x="1397" y="539" width="1" height="56" fill="rgb(108,108,108)"/><rect x="1397" y="595" width="1" height="56" fill="rgb(110,110,110)"/><rect x="1397" y="651" width="1" height="56" fill="rgb(111,111,111)"/><rect x="1397" y="707" width="1" height="56" fill="rgb(113,113,113)"/><rect x="1397" y="763" width="1" height="56" fill="rgb(115,115,115)"/><rect x="1397" y="819" width="1" height="56" fill="rgb(117,117,117)"/><rect x="1397" y="875" width="1" height="56" fill="rgb(119,119,119)"/><rect x="1397" y="931" width="1" height="56" fill="rgb(121,121,121)"/><rect x="1481" y="203" width="1" height="56" fill="rgb(58,58,58)"/><rect x="1481" y="259" width="1" height="56" fill="rgb(59,59,59)"/><rect x="1481" y="315" width="1" height="56" fill="rgb(60,60,60)"/><rect x="1481" y="371" width="1" height="56" fill="rgb(61,61,61)"/><rect x="1481" y="427" width="1" height="56" fill="rgb(62,62,62)"/><rect x="1481" y="483" width="1" height="56" fill="rgb(63,63,63)"/><rect x="1481" y="539" width="1" height="56" fill="rgb(64,64,64)"/><rect x="1481" y="595" width="1" height="56" fill="rgb(65,65,65)"/><rect x="1481" y="651" width="1" height="56" fill="rgb(66,66,66)"/><rect x="1481" y="707" width="1" height="56" fill="rgb(67,67,67)"/><rect x="1481" y="763" width="1" height="56" fill="rgb(68,68,68)"/><rect x="1481" y="819" width="1" height="56" fill="rgb(69,69,69)"/><rect x="1481" y="875" width="1" height="56" fill="rgb(70,70,70)"/><rect x="1481" y="931" width="1" height="56" fill="rgb(70,70,70)"/><rect x="1564" y="203" width="1" height="56" fill="rgb(96,96,96)"/><rect x="1564" y="259" width="1" height="56" fill="rgb(98,98,98)"/><rect x="1564" y="315" width="1" height="56" fill="rgb(100,100,100)"/><rect x="1564" y="371" width="1" height="56" fill="rgb(102,102,102)"/><rect x="1564" y="427" width="1" height="56" fill="rgb(104,104,104)"/><rect x="1564" y="483" width="1" height="56" fill="rgb(106,106,106)"/><rect x="1564" y="539" width="1" height="56" fill="rgb(108,108,108)"/><rect x="1564" y="595" width="1" height="56" fill="rgb(110,110,110)"/><rect x="1564" y="651" width="1" height="56" fill="rgb(111,111,111)"/><rect x="1564" y="707" width="1" height="56" fill="rgb(113,113,113)"/><rect x="1564" y="763" width="1" height="56" fill="rgb(115,115,115)"/><rect x="1564" y="819" width="1" height="56" fill="rgb(117,117,117)"/><rect x="1564" y="875" width="1" height="56" fill="rgb(119,119,119)"/><rect x="1564" y="931" width="1" height="56" fill="rgb(121,121,121)"/><rect x="1648" y="203" width="1" height="56" fill="rgb(58,58,58)"/><rect x="1648" y="259" width="1" height="56" fill="rgb(59,59,59)"/><rect x="1648" y="315" width="1" height="56" fill="rgb(60,60,60)"/><rect x="1648" y="371" width="1" height="56" fill="rgb(61,61,61)"/><rect x="1648" y="427" width="1" height="56" fill="rgb(62,62,62)"/><rect x="1648" y="483" width="1" height="56" fill="rgb(63,63,63)"/><rect x="1648" y="539" width="1" height="56" fill="rgb(64,64,64)"/><rect x="1648" y="595" width="1" height="56" fill="rgb(65,65,65)"/><rect x="1648" y="651" width="1" height="56" fill="rgb(66,66,66)"/><rect x="1648" y="707" width="1" height="56" fill="rgb(67,67,67)"/><rect x="1648" y="763" width="1" height="56" fill="rgb(68,68,68)"/><rect x="1648" y="819" width="1" height="56" fill="rgb(69,69,69)"/><rect x="1648" y="875" width="1" height="56" fill="rgb(70,70,70)"/><rect x="1648" y="931" width="1" height="56" fill="rgb(70,70,70)"/><rect x="1732" y="203" width="1" height="56" fill="rgb(96,96,96)"/><rect x="1732" y="259" width="1" height="56" fill="rgb(98,98,98)"/><rect x="1732" y="315" width="1" height="56" fill="rgb(100,100,100)"/><rect x="1732" y="371" width="1" height="56" fill="rgb(102,102,102)"/><rect x="1732" y="427" width="1" height="56" fill="rgb(104,104,104)"/><rect x="1732" y="483" width="1" height="56" fill="rgb(106,106,106)"/><rect x="1732" y="539" width="1" height="56" fill="rgb(108,108,108)"/><rect x="1732" y="595" width="1" height="56" fill="rgb(110,110,110)"/><rect x="1732" y="651" width="1" height="56" fill="rgb(111,111,111)"/><rect x="1732" y="707" width="1" height="56" fill="rgb(113,113,113)"/><rect x="1732" y="763" width="1" height="56" fill="rgb(115,115,115)"/><rect x="1732" y="819" width="1" height="56" fill="rgb(117,117,117)"/><rect x="1732" y="875" width="1" height="56" fill="rgb(119,119,119)"/><rect x="1732" y="931" width="1" height="56" fill="rgb(121,121,121)"/><rect x="56" y="203" width="1677" height="1" fill="rgb(96,96,96)"/><rect x="56" y="259" width="1677" height="1" fill="rgb(59,59,59)"/><rect x="56" y="315" width="1677" height="1" fill="rgb(100,100,100)"/><rect x="56" y="371" width="1677" height="1" fill="rgb(61,61,61)"/><rect x="56" y="427" width="1677" height="1" fill="rgb(104,104,104)"/><rect x="56" y="483" width="1677" height="1" fill="rgb(63,63,63)"/><rect x="56" y="539" width="1677" height="1" fill="rgb(108,108,108)"/><rect x="56" y="595" width="1677" height="1" fill="rgb(65,65,65)"/><rect x="56" y="651" width="1677" height="1" fill="rgb(111,111,111)"/><rect x="56" y="707" width="1677" height="1" fill="rgb(67,67,67)"/><rect x="56" y="763" width="1677" height="1" fill="rgb(115,115,115)"/><rect x="56" y="819" width="1677" height="1" fill="rgb(69,69,69)"/><rect x="56" y="875" width="1677" height="1" fill="rgb(119,119,119)"/><rect x="56" y="931" width="1677" height="1" fill="rgb(70,70,70)"/>
<rect x="52" y="203" width="2" height="1" fill="#888"/><rect x="1735" y="203" width="3" height="1" fill="#888"/><rect x="52" y="315" width="2" height="1" fill="#888"/><rect x="1735" y="315" width="3" height="1" fill="#888"/><rect x="52" y="427" width="2" height="1" fill="#888"/><rect x="1735" y="427" width="3" height="1" fill="#888"/><rect x="52" y="539" width="2" height="1" fill="#888"/><rect x="1735" y="539" width="3" height="1" fill="#888"/><rect x="52" y="651" width="2" height="1" fill="#888"/><rect x="1735" y="651" width="3" height="1" fill="#888"/><rect x="52" y="763" width="2" height="1" fill="#888"/><rect x="1735" y="763" width="3" height="1" fill="#888"/><rect x="52" y="875" width="2" height="1" fill="#888"/><rect x="1735" y="875" width="3" height="1" fill="#888"/><rect x="56" y="990" width="1" height="4" fill="#888"/><rect x="224" y="990" width="1" height="4" fill="#888"/><rect x="391" y="990" width="1" height="4" fill="#888"/><rect x="559" y="990" width="1" height="4" fill="#888"/><rect x="726" y="990" width="1" height="4" fill="#888"/><rect x="894" y="990" width="1" height="4" fill="#888"/><rect x="1062" y="990" width="1" height="4" fill="#888"/><rect x="1229" y="990" width="1" height="4" fill="#888"/><rect x="1397" y="990" width="1" height="4" fill="#888"/><rect x="1564" y="990" width="1" height="4" fill="#888"/><rect x="1732" y="990" width="1" height="4" fill="#888"/>
<g fill="#c0c000"><rect x="58" y="901" width="2" height="2"/><rect x="59" y="906" width="2" height="2"/><rect x="63" y="906" width="2" height="2"/><rect x="71" y="891" width="2" height="2"/><rect x="76" y="891" width="2" height="2"/><rect x="78" y="892" width="2" height="2"/><rect x="90" y="901" width="2" height="2"/><rect x="91" y="905" width="2" height="2"/><rect x="93" y="891" width="2" height="2"/><rect x="96" y="891" width="2" height="2"/><rect x="104" y="890" width="2" height="2"/><rect x="116" y="901" width="2" height="2"/><rect x="118" y="889" width="2" height="2"/><rect x="122" y="906" width="2" height="2"/><rect x="130" y="891" width="2" height="2"/><rect x="130" y="906" width="2" height="2"/><rect x="132" y="907" width="2" height="2"/><rect x="144" y="902" width="2" height="2"/><rect x="147" y="908" width="2" height="2"/><rect x="150" y="908" width="2" height="2"/><rect x="152" y="898" width="2" height="2"/><rect x="154" y="901" width="2" height="2"/><rect x="155" y="905" width="2" height="2"/><rect x="161" y="891" width="2" height="2"/><rect x="165" y="892" width="2" height="2"/><rect x="174" y="900" width="2" height="2"/><rect x="176" y="906" width="2" height="2"/><rect x="180" y="906" width="2" height="2"/><rect x="186" y="891" width="2" height="2"/><rect x="190" y="901" width="2" height="2"/><rect x="194" y="906" width="2" height="2"/><rect x="196" y="891" width="2" height="2"/><rect x="204" y="891" width="2" height="2"/><rect x="208" y="901" width="2" height="2"/><rect x="210" y="891" width="2" height="2"/><rect x="216" y="907" width="2" height="2"/><rect x="220" y="906" width="2" height="2"/><rect x="224" y="900" width="2" height="2"/><rect x="225" y="907" width="2" height="2"/><rect x="230" y="900" width="2" height="2"/><rect x="241" y="892" width="2" height="2"/><rect x="246" y="889" width="2" height="2"/><rect x="248" y="907" width="2" height="2"/><rect x="250" y="907" width="2" height="2"/><rect x="260" y="891" width="2" height="2"/><rect x="262" y="901" width="2" height="2"/><rect x="266" y="901" width="2" height="2"/><rect x="279" y="891" width="2" height="2"/><rect x="287" y="890" width="2" height="2"/><rect x="289" y="891" width="2" height="2"/><rect x="288" y="902" width="2" height="2"/><rect x="295" y="890" width="2" height="2"/><rect x="299" y="891" width="2" height="2"/><rect x="305" y="883" width="2" height="2"/><rect x="325" y="891" width="2" height="2"/><rect x="347" y="881" width="2" height="2"/><rect x="356" y="901" width="2" height="2"/><rect x="366" y="906" width="2" height="2"/><rect x="371" y="905" width="2" height="2"/><rect x="376" y="900" width="2" height="2"/><rect x="378" y="892" width="2" height="2"/><rect x="377" y="901" width="2" height="2"/><rect x="381" y="907" width="2" height="2"/><rect x="392" y="891" width="2" height="2"/><rect x="392" y="901" width="2" height="2"/><rect x="397" y="901" width="2" height="2"/><rect x="402" y="900" width="2" height="2"/><rect x="411" y="892" width="2" height="2"/><rect x="413" y="907" width="2" height="2"/><rect x="417" y="891" width="2" height="2"/><rect x="417" y="900" width="2" height="2"/><rect x="422" y="891" width="2" height="2"/><rect x="425" y="891" width="2" height="2"/><rect x="426" y="904" width="2" height="2"/><rect x="431" y="908" width="2" height="2"/><rect x="442" y="907" width="2" height="2"/><rect x="451" y="906" width="2" height="2"/><rect x="460" y="907" width="2" height="2"/><rect x="471" y="901" width="2" height="2"/><rect x="477" y="908" width="2" height="2"/><rect x="486" y="925" width="2" height="2"/><rect x="501" y="901" width="2" height="2"/><rect x="500" y="906" width="2" height="2"/><rect x="514" y="891" width="2" height="2"/><rect x="518" y="891" width="2" height="2"/><rect x="538" y="890" width="2" height="2"/><rect x="543" y="892" width="2" height="2"/><rect x="544" y="894" width="2" height="2"/><rect x="543" y="907" width="2" height="2"/><rect x="551" y="901" width="2" height="2"/><rect x="554" y="892" width="2" height="2"/><rect x="555" y="897" width="2" height="2"/><rect x="555" y="892" width="2" height="2"/><rect x="560" y="900" width="2" height="2"/><rect x="565" y="891" width="2" height="2"/><rect x="564" y="906" width="2" height="2"/><rect x="568" y="907" width="2" height="2"/><rect x="580" y="891" width="2" height="2"/><rect x="587" y="906" width="2" height="2"/><rect x="590" y="908" width="2" height="2"/><rect x="595" y="891" width="2" height="2"/><rect x="597" y="890" width="2" height="2"/><rect x="596" y="907" width="2" height="2"/><rect x="604" y="901" width="2" height="2"/><rect x="608" y="890" width="2" height="2"/><rect x="613" y="901" width="2" height="2"/><rect x="629" y="901" width="2" height="2"/><rect x="633" y="898" width="2" height="2"/><rect x="644" y="901" width="2" height="2"/><rect x="77" y="961" width="2" height="2"/><rect x="63" y="975" width="2" height="2"/><rect x="122" y="973" width="2" height="2"/><rect x="165" y="972" width="2" height="2"/><rect x="208" y="969" width="2" height="2"/><rect x="226" y="965" width="2" height="2"/><rect x="280" y="972" width="2" height="2"/><rect x="293" y="972" width="2" height="2"/><rect x="392" y="966" width="2" height="2"/><rect x="404" y="962" width="2" height="2"/><rect x="425" y="971" width="2" height="2"/><rect x="533" y="965" width="2" height="2"/><rect x="543" y="968" width="2" height="2"/><rect x="549" y="975" width="2" height="2"/><rect x="633" y="971" width="2" height="2"/><rect x="646" y="901" width="2" height="2"/><rect x="656" y="907" width="2" height="2"/><rect x="667" y="891" width="2" height="2"/><rect x="686" y="892" width="2" height="2"/><rect x="697" y="900" width="2" height="2"/><rect x="698" y="905" width="2" height="2"/><rect x="701" y="906" width="2" height="2"/><rect x="702" y="900" width="2" height="2"/><rect x="708" y="891" width="2" height="2"/><rect x="708" y="906" width="2" height="2"/><rect x="721" y="907" width="2" height="2"/><rect x="722" y="900" width="2" height="2"/><rect x="722" y="902" width="2" height="2"/><rect x="730" y="905" width="2" height="2"/><rect x="737" y="891" width="2" height="2"/><rect x="737" y="901" width="2" height="2"/><rect x="742" y="901" width="2" height="2"/><rect x="759" y="900" width="2" height="2"/><rect x="766" y="906" width="2" height="2"/><rect x="771" y="891" width="2" height="2"/><rect x="782" y="890" width="2" height="2"/><rect x="782" y="905" width="2" height="2"/><rect x="786" y="901" width="2" height="2"/><rect x="791" y="891" width="2" height="2"/><rect x="803" y="901" width="2" height="2"/><rect x="805" y="906" width="2" height="2"/><rect x="808" y="891" width="2" height="2"/><rect x="813" y="891" width="2" height="2"/><rect x="815" y="901" width="2" height="2"/><rect x="820" y="906" width="2" height="2"/><rect x="826" y="890" width="2" height="2"/><rect x="836" y="896" width="2" height="2"/><rect x="838" y="906" width="2" height="2"/><rect x="845" y="906" width="2" height="2"/><rect x="850" y="891" width="2" height="2"/><rect x="856" y="895" width="2" height="2"/><rect x="862" y="906" width="2" height="2"/><rect x="863" y="900" width="2" height="2"/><rect x="867" y="901" width="2" height="2"/><rect x="872" y="900" width="2" height="2"/><rect x="883" y="900" width="2" height="2"/><rect x="884" y="890" width="2" height="2"/><rect x="890" y="892" width="2" height="2"/><rect x="890" y="907" width="2" height="2"/><rect x="895" y="901" width="2" height="2"/><rect x="902" y="891" width="2" height="2"/><rect x="904" y="906" width="2" height="2"/><rect x="907" y="907" width="2" height="2"/><rect x="908" y="901" width="2" height="2"/><rect x="912" y="901" width="2" height="2"/><rect x="920" y="900" width="2" height="2"/><rect x="924" y="890" width="2" height="2"/><rect x="926" y="891" width="2" height="2"/><rect x="933" y="906" width="2" height="2"/><rect x="946" y="875" width="2" height="2"/><rect x="956" y="906" width="2" height="2"/><rect x="958" y="891" width="2" height="2"/><rect x="963" y="890" width="2" height="2"/><rect x="981" y="900" width="2" height="2"/><rect x="986" y="885" width="2" height="2"/><rect x="1005" y="891" width="2" height="2"/><rect x="1015" y="891" width="2" height="2"/><rect x="1017" y="890" width="2" height="2"/><rect x="1050" y="901" width="2" height="2"/><rect x="1066" y="900" width="2" height="2"/><rect x="1098" y="907" width="2" height="2"/><rect x="1145" y="893" width="2" height="2"/><rect x="1158" y="890" width="2" height="2"/><rect x="1167" y="896" width="2" height="2"/><rect x="1170" y="907" width="2" height="2"/><rect x="1197" y="891" width="2" height="2"/><rect x="1197" y="900" width="2" height="2"/><rect x="1209" y="900" width="2" height="2"/><rect x="1220" y="907" width="2" height="2"/><rect x="1223" y="891" width="2" height="2"/><rect x="1227" y="891" width="2" height="2"/><rect x="1227" y="906" width="2" height="2"/><rect x="1231" y="866" width="2" height="2"/><rect x="701" y="961" width="2" height="2"/><rect x="720" y="972" width="2" height="2"/><rect x="755" y="976" width="2" height="2"/><rect x="828" y="977" width="2" height="2"/><rect x="913" y="965" width="2" height="2"/><rect x="927" y="973" width="2" height="2"/><rect x="941" y="963" width="2" height="2"/><rect x="952" y="961" width="2" height="2"/><rect x="981" y="967" width="2" height="2"/><rect x="1042" y="965" width="2" height="2"/><rect x="1042" y="972" width="2" height="2"/><rect x="1098" y="973" width="2" height="2"/><rect x="1109" y="976" width="2" height="2"/><rect x="1125" y="979" width="2" height="2"/><rect x="1169" y="977" width="2" height="2"/><rect x="1208" y="972" width="2" height="2"/><rect x="1145" y="893" width="2" height="2"/><rect x="1158" y="890" width="2" height="2"/><rect x="1167" y="896" width="2" height="2"/><rect x="1170" y="907" width="2" height="2"/><rect x="1197" y="891" width="2" height="2"/><rect x="1197" y="900" width="2" height="2"/><rect x="1209" y="900" width="2" height="2"/><rect x="1220" y="907" width="2" height="2"/><rect x="1223" y="891" width="2" height="2"/><rect x="1227" y="891" width="2" height="2"/><rect x="1227" y="906" width="2" height="2"/><rect x="1230" y="866" width="2" height="2"/><rect x="1236" y="901" width="2" height="2"/><rect x="1241" y="900" width="2" height="2"/><rect x="1255" y="890" width="2" height="2"/><rect x="1262" y="891" width="2" height="2"/><rect x="1266" y="906" width="2" height="2"/><rect x="1271" y="892" width="2" height="2"/><rect x="1291" y="906" width="2" height="2"/><rect x="1301" y="891" width="2" height="2"/><rect x="1321" y="906" width="2" height="2"/><rect x="1336" y="901" width="2" height="2"/><rect x="1340" y="900" width="2" height="2"/><rect x="1366" y="902" width="2" height="2"/><rect x="1370" y="907" width="2" height="2"/><rect x="1395" y="880" width="2" height="2"/><rect x="1408" y="901" width="2" height="2"/><rect x="1408" y="903" width="2" height="2"/><rect x="1442" y="901" width="2" height="2"/><rect x="1447" y="898" width="2" height="2"/><rect x="1448" y="891" width="2" height="2"/><rect x="1452" y="892" width="2" height="2"/><rect x="1532" y="906" width="2" height="2"/><rect x="1546" y="900" width="2" height="2"/><rect x="1578" y="892" width="2" height="2"/><rect x="1592" y="907" width="2" height="2"/><rect x="1596" y="896" width="2" height="2"/><rect x="1622" y="891" width="2" height="2"/><rect x="1631" y="900" width="2" height="2"/><rect x="1655" y="906" width="2" height="2"/><rect x="1695" y="891" width="2" height="2"/><rect x="1208" y="972" width="2" height="2"/><rect x="1316" y="958" width="2" height="2"/><rect x="1334" y="968" width="2" height="2"/><rect x="1641" y="977" width="2" height="2"/><rect x="1139" y="978" width="2" height="2"/><rect x="1144" y="978" width="2" height="2"/><rect x="1150" y="978" width="2" height="2"/><rect x="1155" y="978" width="2" height="2"/><rect x="1159" y="978" width="2" height="2"/><rect x="1169" y="977" width="2" height="2"/><rect x="1173" y="978" width="2" height="2"/><rect x="1175" y="978" width="2" height="2"/><rect x="1192" y="978" width="2" height="2"/><rect x="1205" y="978" width="2" height="2"/><rect x="1217" y="978" width="2" height="2"/><rect x="1227" y="978" width="2" height="2"/><rect x="1229" y="978" width="2" height="2"/><rect x="1237" y="978" width="2" height="2"/><rect x="1242" y="977" width="2" height="2"/><rect x="1247" y="978" width="2" height="2"/><rect x="1270" y="978" width="2" height="2"/><rect x="1273" y="978" width="2" height="2"/><rect x="1278" y="978" width="2" height="2"/><rect x="1281" y="978" width="2" height="2"/><rect x="1292" y="978" width="2" height="2"/><rect x="1301" y="978" width="2" height="2"/><rect x="1309" y="978" width="2" height="2"/><rect x="1315" y="978" width="2" height="2"/><rect x="1317" y="978" width="2" height="2"/><rect x="1326" y="978" width="2" height="2"/><rect x="1337" y="978" width="2" height="2"/><rect x="1342" y="978" width="2" height="2"/><rect x="1346" y="978" width="2" height="2"/><rect x="1359" y="978" width="2" height="2"/><rect x="1375" y="978" width="2" height="2"/><rect x="1384" y="978" width="2" height="2"/><rect x="1395" y="978" width="2" height="2"/><rect x="1401" y="978" width="2" height="2"/><rect x="1404" y="978" width="2" height="2"/><rect x="1425" y="978" width="2" height="2"/><rect x="1444" y="978" width="2" height="2"/><rect x="1455" y="978" width="2" height="2"/><rect x="1483" y="978" width="2" height="2"/><rect x="1497" y="978" width="2" height="2"/><rect x="1523" y="978" width="2" height="2"/><rect x="1542" y="978" width="2" height="2"/><rect x="1552" y="978" width="2" height="2"/><rect x="1571" y="978" width="2" height="2"/><rect x="1631" y="978" width="2" height="2"/><rect x="1634" y="978" width="2" height="2"/><rect x="57" y="978" width="2" height="2"/><rect x="59" y="978" width="2" height="2"/><rect x="63" y="978" width="2" height="2"/><rect x="67" y="978" width="2" height="2"/><rect x="69" y="978" width="2" height="2"/><rect x="73" y="978" width="2" height="2"/><rect x="75" y="978" width="2" height="2"/><rect x="77" y="978" width="2" height="2"/><rect x="79" y="978" width="2" height="2"/><rect x="81" y="978" width="2" height="2"/><rect x="85" y="978" width="2" height="2"/><rect x="87" y="978" width="2" height="2"/><rect x="95" y="978" width="2" height="2"/><rect x="99" y="978" width="2" height="2"/><rect x="103" y="978" width="2" height="2"/><rect x="105" y="978" width="2" height="2"/><rect x="107" y="978" width="2" height="2"/><rect x="109" y="978" width="2" height="2"/><rect x="113" y="978" width="2" height="2"/><rect x="119" y="978" width="2" height="2"/><rect x="123" y="978" width="2" height="2"/><rect x="125" y="978" width="2" height="2"/><rect x="127" y="978" width="2" height="2"/><rect x="131" y="978" width="2" height="2"/><rect x="133" y="978" width="2" height="2"/><rect x="137" y="978" width="2" height="2"/><rect x="139" y="978" width="2" height="2"/><rect x="145" y="978" width="2" height="2"/><rect x="155" y="978" width="2" height="2"/><rect x="159" y="978" width="2" height="2"/><rect x="161" y="978" width="2" height="2"/><rect x="165" y="978" width="2" height="2"/><rect x="167" y="978" width="2" height="2"/><rect x="169" y="978" width="2" height="2"/><rect x="179" y="978" width="2" height="2"/><rect x="187" y="978" width="2" height="2"/><rect x="193" y="978" width="2" height="2"/><rect x="197" y="978" width="2" height="2"/><rect x="207" y="978" width="2" height="2"/><rect x="209" y="978" width="2" height="2"/><rect x="213" y="978" width="2" height="2"/><rect x="215" y="978" width="2" height="2"/><rect x="217" y="978" width="2" height="2"/><rect x="219" y="978" width="2" height="2"/><rect x="221" y="978" width="2" height="2"/><rect x="225" y="978" width="2" height="2"/><rect x="227" y="978" width="2" height="2"/><rect x="229" y="978" width="2" height="2"/><rect x="233" y="978" width="2" height="2"/><rect x="235" y="978" width="2" height="2"/><rect x="245" y="978" width="2" height="2"/><rect x="247" y="978" width="2" height="2"/><rect x="249" y="978" width="2" height="2"/><rect x="255" y="978" width="2" height="2"/><rect x="257" y="978" width="2" height="2"/><rect x="259" y="978" width="2" height="2"/><rect x="261" y="978" width="2" height="2"/><rect x="263" y="978" width="2" height="2"/><rect x="267" y="978" width="2" height="2"/><rect x="269" y="978" width="2" height="2"/><rect x="271" y="978" width="2" height="2"/><rect x="273" y="978" width="2" height="2"/><rect x="287" y="978" width="2" height="2"/><rect x="297" y="978" width="2" height="2"/><rect x="299" y="978" width="2" height="2"/><rect x="301" y="978" width="2" height="2"/><rect x="305" y="978" width="2" height="2"/><rect x="307" y="978" width="2" height="2"/><rect x="309" y="978" width="2" height="2"/><rect x="311" y="978" width="2" height="2"/><rect x="313" y="978" width="2" height="2"/><rect x="315" y="978" width="2" height="2"/><rect x="317" y="978" width="2" height="2"/><rect x="319" y="978" width="2" height="2"/><rect x="321" y="978" width="2" height="2"/><rect x="323" y="978" width="2" height="2"/><rect x="325" y="978" width="2" height="2"/><rect x="331" y="978" width="2" height="2"/><rect x="333" y="978" width="2" height="2"/><rect x="335" y="978" width="2" height="2"/><rect x="337" y="978" width="2" height="2"/><rect x="339" y="978" width="2" height="2"/><rect x="345" y="978" width="2" height="2"/><rect x="347" y="978" width="2" height="2"/><rect x="349" y="978" width="2" height="2"/><rect x="351" y="978" width="2" height="2"/><rect x="353" y="978" width="2" height="2"/><rect x="355" y="978" width="2" height="2"/><rect x="359" y="978" width="2" height="2"/><rect x="361" y="978" width="2" height="2"/><rect x="367" y="978" width="2" height="2"/><rect x="371" y="978" width="2" height="2"/><rect x="381" y="978" width="2" height="2"/><rect x="383" y="978" width="2" height="2"/><rect x="385" y="978" width="2" height="2"/><rect x="393" y="978" width="2" height="2"/><rect x="395" y="978" width="2" height="2"/><rect x="409" y="978" width="2" height="2"/><rect x="413" y="978" width="2" height="2"/><rect x="415" y="978" width="2" height="2"/><rect x="417" y="978" width="2" height="2"/><rect x="419" y="978" width="2" height="2"/><rect x="421" y="978" width="2" height="2"/><rect x="427" y="978" width="2" height="2"/><rect x="435" y="978" width="2" height="2"/><rect x="437" y="978" width="2" height="2"/><rect x="439" y="978" width="2" height="2"/><rect x="441" y="978" width="2" height="2"/><rect x="443" y="978" width="2" height="2"/><rect x="451" y="978" width="2" height="2"/><rect x="457" y="978" width="2" height="2"/><rect x="467" y="978" width="2" height="2"/><rect x="469" y="978" width="2" height="2"/><rect x="473" y="978" width="2" height="2"/><rect x="479" y="978" width="2" height="2"/><rect x="481" y="978" width="2" height="2"/><rect x="487" y="978" width="2" height="2"/><rect x="489" y="978" width="2" height="2"/><rect x="491" y="978" width="2" height="2"/><rect x="497" y="978" width="2" height="2"/><rect x="505" y="978" width="2" height="2"/><rect x="509" y="978" width="2" height="2"/><rect x="511" y="978" width="2" height="2"/><rect x="521" y="978" width="2" height="2"/><rect x="527" y="978" width="2" height="2"/><rect x="529" y="978" width="2" height="2"/><rect x="531" y="978" width="2" height="2"/><rect x="533" y="978" width="2" height="2"/><rect x="537" y="978" width="2" height="2"/><rect x="539" y="978" width="2" height="2"/><rect x="541" y="978" width="2" height="2"/><rect x="545" y="978" width="2" height="2"/><rect x="547" y="978" width="2" height="2"/><rect x="553" y="978" width="2" height="2"/><rect x="563" y="978" width="2" height="2"/><rect x="565" y="978" width="2" height="2"/><rect x="567" y="978" width="2" height="2"/><rect x="569" y="978" width="2" height="2"/><rect x="573" y="978" width="2" height="2"/><rect x="575" y="978" width="2" height="2"/><rect x="581" y="978" width="2" height="2"/><rect x="589" y="978" width="2" height="2"/><rect x="593" y="978" width="2" height="2"/><rect x="595" y="978" width="2" height="2"/><rect x="607" y="978" width="2" height="2"/><rect x="617" y="978" width="2" height="2"/><rect x="621" y="978" width="2" height="2"/><rect x="631" y="978" width="2" height="2"/><rect x="639" y="978" width="2" height="2"/><rect x="641" y="978" width="2" height="2"/><rect x="643" y="978" width="2" height="2"/><rect x="645" y="978" width="2" height="2"/><rect x="647" y="978" width="2" height="2"/><rect x="649" y="978" width="2" height="2"/><rect x="657" y="978" width="2" height="2"/><rect x="663" y="978" width="2" height="2"/><rect x="669" y="978" width="2" height="2"/><rect x="673" y="978" width="2" height="2"/><rect x="675" y="978" width="2" height="2"/><rect x="681" y="978" width="2" height="2"/><rect x="683" y="978" width="2" height="2"/><rect x="687" y="978" width="2" height="2"/><rect x="689" y="978" width="2" height="2"/><rect x="691" y="978" width="2" height="2"/><rect x="695" y="978" width="2" height="2"/><rect x="699" y="978" width="2" height="2"/><rect x="701" y="978" width="2" height="2"/><rect x="703" y="978" width="2" height="2"/><rect x="709" y="978" width="2" height="2"/><rect x="717" y="978" width="2" height="2"/><rect x="719" y="978" width="2" height="2"/><rect x="721" y="978" width="2" height="2"/><rect x="725" y="978" width="2" height="2"/><rect x="727" y="978" width="2" height="2"/><rect x="729" y="978" width="2" height="2"/><rect x="735" y="978" width="2" height="2"/><rect x="737" y="978" width="2" height="2"/><rect x="745" y="978" width="2" height="2"/><rect x="747" y="978" width="2" height="2"/><rect x="751" y="978" width="2" height="2"/><rect x="753" y="978" width="2" height="2"/><rect x="761" y="978" width="2" height="2"/><rect x="765" y="978" width="2" height="2"/><rect x="769" y="978" width="2" height="2"/><rect x="771" y="978" width="2" height="2"/><rect x="777" y="978" width="2" height="2"/><rect x="779" y="978" width="2" height="2"/><rect x="783" y="978" width="2" height="2"/><rect x="785" y="978" width="2" height="2"/><rect x="787" y="978" width="2" height="2"/><rect x="789" y="978" width="2" height="2"/><rect x="791" y="978" width="2" height="2"/><rect x="793" y="978" width="2" height="2"/><rect x="795" y="978" width="2" height="2"/><rect x="799" y="978" width="2" height="2"/><rect x="803" y="978" width="2" height="2"/><rect x="805" y="978" width="2" height="2"/><rect x="807" y="978" width="2" height="2"/><rect x="809" y="978" width="2" height="2"/><rect x="811" y="978" width="2" height="2"/><rect x="817" y="978" width="2" height="2"/><rect x="819" y="978" width="2" height="2"/><rect x="823" y="978" width="2" height="2"/><rect x="827" y="978" width="2" height="2"/><rect x="829" y="978" width="2" height="2"/><rect x="833" y="978" width="2" height="2"/><rect x="841" y="978" width="2" height="2"/><rect x="849" y="978" width="2" height="2"/><rect x="851" y="978" width="2" height="2"/><rect x="853" y="978" width="2" height="2"/><rect x="855" y="978" width="2" height="2"/><rect x="857" y="978" width="2" height="2"/><rect x="861" y="978" width="2" height="2"/><rect x="863" y="978" width="2" height="2"/><rect x="865" y="978" width="2" height="2"/><rect x="873" y="978" width="2" height="2"/><rect x="875" y="978" width="2" height="2"/><rect x="877" y="978" width="2" height="2"/><rect x="879" y="978" width="2" height="2"/><rect x="881" y="978" width="2" height="2"/><rect x="883" y="978" width="2" height="2"/><rect x="885" y="978" width="2" height="2"/><rect x="893" y="978" width="2" height="2"/><rect x="897" y="978" width="2" height="2"/><rect x="899" y="978" width="2" height="2"/><rect x="901" y="978" width="2" height="2"/><rect x="903" y="978" width="2" height="2"/><rect x="905" y="978" width="2" height="2"/><rect x="909" y="978" width="2" height="2"/><rect x="913" y="978" width="2" height="2"/><rect x="915" y="978" width="2" height="2"/><rect x="917" y="978" width="2" height="2"/><rect x="919" y="978" width="2" height="2"/><rect x="921" y="978" width="2" height="2"/><rect x="923" y="978" width="2" height="2"/><rect x="925" y="978" width="2" height="2"/><rect x="927" y="978" width="2" height="2"/><rect x="941" y="978" width="2" height="2"/><rect x="943" y="978" width="2" height="2"/><rect x="947" y="978" width="2" height="2"/><rect x="953" y="978" width="2" height="2"/><rect x="965" y="978" width="2" height="2"/><rect x="985" y="978" width="2" height="2"/><rect x="987" y="978" width="2" height="2"/><rect x="989" y="978" width="2" height="2"/><rect x="991" y="978" width="2" height="2"/><rect x="993" y="978" width="2" height="2"/><rect x="1005" y="978" width="2" height="2"/><rect x="1007" y="978" width="2" height="2"/><rect x="1019" y="978" width="2" height="2"/><rect x="1023" y="978" width="2" height="2"/><rect x="1025" y="978" width="2" height="2"/><rect x="1027" y="978" width="2" height="2"/><rect x="1031" y="978" width="2" height="2"/><rect x="1037" y="978" width="2" height="2"/><rect x="1039" y="978" width="2" height="2"/><rect x="1041" y="978" width="2" height="2"/><rect x="1051" y="978" width="2" height="2"/><rect x="1053" y="978" width="2" height="2"/><rect x="1055" y="978" width="2" height="2"/><rect x="1059" y="978" width="2" height="2"/><rect x="1063" y="978" width="2" height="2"/><rect x="1065" y="978" width="2" height="2"/><rect x="1067" y="978" width="2" height="2"/><rect x="1075" y="978" width="2" height="2"/><rect x="1079" y="978" width="2" height="2"/><rect x="1081" y="978" width="2" height="2"/><rect x="1083" y="978" width="2" height="2"/><rect x="1087" y="978" width="2" height="2"/></g>
<polyline points="56.0,786.6 64.4,863.6 72.9,863.6 81.3,900.0 89.7,902.0 98.1,730.0 106.6,878.4 115.0,816.0 123.4,754.0 131.8,829.6 140.3,840.0 148.7,886.7 157.1,835.5 165.6,822.7 174.0,854.0 182.4,820.7 190.8,296.9 199.3,297.8 207.7,358.5 216.1,844.4 224.5,819.2 233.0,846.4 241.4,840.0 249.8,824.5 258.2,734.0 266.7,820.7 275.1,829.0 283.5,819.2 292.0,629.6 300.4,855.3 308.8,838.4 317.2,832.5 325.7,848.2 334.1,391.0 342.5,820.7 350.9,792.0 359.4,799.0 367.8,492.7 376.2,659.3 384.7,596.0 393.1,755.5 401.5,684.0 409.9,611.8 418.4,762.3 426.8,617.8 435.2,709.0 443.6,790.5 452.1,329.0 460.5,374.8 468.9,357.0 477.3,722.9 485.8,728.8 494.2,780.7 502.6,832.5 511.1,811.8 519.5,825.0 527.9,580.0 536.3,349.6 544.8,397.0 553.2,783.6 561.6,337.8 570.0,305.2 578.5,323.8 586.9,657.8 595.3,450.0 603.8,331.8 612.2,668.1 620.6,606.5 629.0,670.0 637.5,773.3 645.9,690.3 654.3,804.4 662.7,827.5 671.2,719.0 679.6,828.0 688.0,320.0 696.5,654.8 704.9,508.7 713.3,594.0 721.7,359.4 730.2,349.6 738.6,809.7 747.0,619.3 755.4,614.2 763.9,785.0 772.3,857.7 780.7,440.0 789.1,322.1 797.6,862.0 806.0,355.6 814.4,655.0 822.9,770.3 831.3,600.0 839.7,333.3 848.1,308.0 856.6,312.0 865.0,681.5 873.4,308.5 881.8,303.7 890.3,307.3 898.7,303.1 907.1,727.4 915.6,690.3 924.0,814.8 932.4,312.6 940.8,555.5 949.3,430.0 957.7,309.0 966.1,517.0 974.5,725.9 983.0,650.0 991.4,314.0 999.8,321.5 1008.3,421.6 1016.7,383.0 1025.1,867.0 1033.5,906.6 1042.0,850.0 1050.4,334.8 1058.8,386.6 1067.2,816.2 1075.7,308.0 1084.1,454.0 1092.5,777.7 1100.9,309.6 1109.4,305.2 1117.8,308.1 1126.2,340.7 1134.7,306.7 1143.1,592.5 1151.5,524.4 1159.9,709.6 1168.4,308.0 1176.8,306.0 1185.2,306.0 1193.6,324.4 1202.1,718.5 1210.5,306.7 1218.9,496.2 1227.4,309.6 1235.8,306.0 1244.2,324.4 1252.6,345.0 1261.1,760.0 1269.5,309.6 1277.9,771.8 1286.3,307.0 1294.8,303.3 1303.2,304.3 1311.6,304.3 1320.0,304.3 1328.5,304.3 1336.9,794.4 1345.3,302.7 1353.8,632.6 1362.2,474.5 1370.6,698.0 1379.0,306.0 1387.5,306.0 1395.9,311.8 1404.3,306.0 1412.7,306.0 1421.2,318.9 1429.6,330.2 1438.0,331.9 1446.5,327.0 1454.9,324.7 1463.3,328.0 1471.7,323.1 1480.2,324.7 1488.6,325.4 1497.0,324.4 1505.4,324.4 1513.9,316.3 1522.3,306.0 1530.7,304.3 1539.2,309.8 1547.6,321.5 1556.0,305.3 1564.4,309.2 1572.9,303.3 1581.3,305.3 1589.7,304.3 1598.1,306.6 1606.6,322.1 1615.0,308.5 1623.4,309.8 1631.8,311.8 1640.3,306.0 1648.7,307.6 1657.1,309.2 1665.6,307.6 1674.0,303.3 1682.4,304.3 1690.8,304.3 1699.3,305.3 1707.7,305.3 1716.1,305.3 1724.5,304.3 1733.0,631.5" fill="none" stroke="#0eacea" stroke-width="1.35" stroke-linejoin="miter" stroke-miterlimit="10"/>
<text x="49.3" y="208.6" font-size="14" fill="#000" text-anchor="end" textLength="22.19" lengthAdjust="spacingAndGlyphs">700</text>
<text x="1739.3" y="208.6" font-size="14" fill="#000" textLength="25" lengthAdjust="spacingAndGlyphs">3.50</text>
<text x="49.3" y="320.6" font-size="14" fill="#000" text-anchor="end" textLength="22.19" lengthAdjust="spacingAndGlyphs">600</text>
<text x="1739.3" y="320.6" font-size="14" fill="#000" textLength="25" lengthAdjust="spacingAndGlyphs">3.00</text>
<text x="49.3" y="432.6" font-size="14" fill="#000" text-anchor="end" textLength="22.19" lengthAdjust="spacingAndGlyphs">500</text>
<text x="1739.3" y="432.6" font-size="14" fill="#000" textLength="25" lengthAdjust="spacingAndGlyphs">2.50</text>
<text x="49.3" y="544.6" font-size="14" fill="#000" text-anchor="end" textLength="22.19" lengthAdjust="spacingAndGlyphs">400</text>
<text x="1739.3" y="544.6" font-size="14" fill="#000" textLength="25" lengthAdjust="spacingAndGlyphs">2.00</text>
<text x="49.3" y="656.6" font-size="14" fill="#000" text-anchor="end" textLength="22.19" lengthAdjust="spacingAndGlyphs">300</text>
<text x="1739.3" y="656.6" font-size="14" fill="#000" textLength="25" lengthAdjust="spacingAndGlyphs">1.50</text>
<text x="49.3" y="768.6" font-size="14" fill="#000" text-anchor="end" textLength="22.19" lengthAdjust="spacingAndGlyphs">200</text>
<text x="1739.3" y="768.6" font-size="14" fill="#000" textLength="25" lengthAdjust="spacingAndGlyphs">1.00</text>
<text x="49.3" y="880.6" font-size="14" fill="#000" text-anchor="end" textLength="22.19" lengthAdjust="spacingAndGlyphs">100</text>
<text x="1739.3" y="880.6" font-size="14" fill="#000" textLength="25" lengthAdjust="spacingAndGlyphs">0.50</text>
<text x="55.2" y="1006.2" font-size="14" fill="#000" text-anchor="middle" textLength="7.4" lengthAdjust="spacingAndGlyphs">0</text>
<text x="222.8" y="1006.2" font-size="14" fill="#000" text-anchor="middle" textLength="14.79" lengthAdjust="spacingAndGlyphs">25</text>
<text x="390.4" y="1006.2" font-size="14" fill="#000" text-anchor="middle" textLength="14.79" lengthAdjust="spacingAndGlyphs">51</text>
<text x="558.0" y="1006.2" font-size="14" fill="#000" text-anchor="middle" textLength="14.79" lengthAdjust="spacingAndGlyphs">76</text>
<text x="725.6" y="1006.2" font-size="14" fill="#000" text-anchor="middle" textLength="22.19" lengthAdjust="spacingAndGlyphs">102</text>
<text x="893.2" y="1006.2" font-size="14" fill="#000" text-anchor="middle" textLength="22.19" lengthAdjust="spacingAndGlyphs">128</text>
<text x="1060.8" y="1006.2" font-size="14" fill="#000" text-anchor="middle" textLength="22.19" lengthAdjust="spacingAndGlyphs">153</text>
<text x="1228.4" y="1006.2" font-size="14" fill="#000" text-anchor="middle" textLength="22.19" lengthAdjust="spacingAndGlyphs">179</text>
<text x="1396.0" y="1006.2" font-size="14" fill="#000" text-anchor="middle" textLength="22.19" lengthAdjust="spacingAndGlyphs">204</text>
<text x="1563.6" y="1006.2" font-size="14" fill="#000" text-anchor="middle" textLength="22.19" lengthAdjust="spacingAndGlyphs">230</text>
<text x="1731.8" y="1006.2" font-size="14" fill="#000" text-anchor="middle" textLength="37.7" lengthAdjust="spacingAndGlyphs">256gB</text>
<text x="56" y="199.8" font-size="13" fill="#000">MB/s</text>
<text x="1732" y="199.8" font-size="13" fill="#000" text-anchor="end">ms</text>
<text x="60" y="218" font-size="13" fill="#a8a8a8">trial version</text>
<rect x="1787.5" y="180.5" width="89" height="25" fill="#e1e1e1" stroke="#adadad" stroke-width="1"/>
<text x="1817.7" y="198.7" font-size="14" fill="#000" textLength="26" lengthAdjust="spacingAndGlyphs">Start</text>
<rect x="1775" y="219" width="126" height="1" fill="#a0a0a0"/>
<rect x="1775" y="268" width="126" height="1" fill="#a0a0a0"/>
<rect x="1775" y="358" width="126" height="1" fill="#a0a0a0"/>
<rect x="1775" y="487" width="126" height="1" fill="#a0a0a0"/>
<circle cx="1789" cy="234.7" r="7" fill="#fff" stroke="#333" stroke-width="1.3"/><circle cx="1789" cy="234.7" r="3.6" fill="#333"/>
<circle cx="1789" cy="254.4" r="7" fill="#fff" stroke="#333" stroke-width="1.3"/>
<text x="1802" y="240" font-size="14" fill="#000" textLength="30.5" lengthAdjust="spacingAndGlyphs">Read</text>
<text x="1802" y="259.4" font-size="14" fill="#000" textLength="30" lengthAdjust="spacingAndGlyphs">Write</text>
<rect x="1782" y="278.5" width="15" height="15" fill="#fff" stroke="#333" stroke-width="1.2"/>
<rect x="1782" y="339.5" width="15" height="15" fill="#fff" stroke="#333" stroke-width="1.2"/>
<path d="M1784.5 347 L1788 351 L1795 343" fill="none" stroke="#333" stroke-width="1.4"/>
<rect x="1782" y="495.5" width="15" height="15" fill="#fff" stroke="#333" stroke-width="1.2"/>
<path d="M1784.5 503 L1788 507 L1795 499" fill="none" stroke="#333" stroke-width="1.4"/>
<rect x="1782" y="538.5" width="15" height="15" fill="#fff" stroke="#333" stroke-width="1.2"/>
<path d="M1784.5 546 L1788 550 L1795 542" fill="none" stroke="#333" stroke-width="1.4"/>
<text x="1802" y="291" font-size="14" fill="#000" textLength="69" lengthAdjust="spacingAndGlyphs">Short stroke</text>
<text x="1802" y="351.25" font-size="14" fill="#000" textLength="74" lengthAdjust="spacingAndGlyphs">Transfer rate</text>
<text x="1802" y="508" font-size="14" fill="#000" textLength="64" lengthAdjust="spacingAndGlyphs">Access time</text>
<text x="1802" y="550.2" font-size="14" fill="#000" textLength="56" lengthAdjust="spacingAndGlyphs">Burst rate</text>
<rect x="1781.5" y="303.5" width="77" height="24" fill="#fff" stroke="#cfcfcf" stroke-width="1"/>
<rect x="1836.5" y="304.5" width="21" height="22" fill="#f0f0f0" stroke="#e0e0e0" stroke-width="1"/>
<path d="M1843.5 312 L1847 308.5 L1850.5 312 Z M1843.5 318.5 L1847 322 L1850.5 318.5 Z" fill="#606060"/>
<text x="1785" y="320" font-size="14" fill="#8a8a8a" textLength="14" lengthAdjust="spacingAndGlyphs">40</text>
<text x="1872" y="319.4" font-size="14" fill="#000" textLength="16.5" lengthAdjust="spacingAndGlyphs">gB</text>
<text x="1782" y="374.8" font-size="14" fill="#000" textLength="49" lengthAdjust="spacingAndGlyphs">Minimum</text>
<text x="1782" y="416.1" font-size="14" fill="#000" textLength="53" lengthAdjust="spacingAndGlyphs">Maximum</text>
<text x="1782" y="453.4" font-size="14" fill="#000" textLength="49" lengthAdjust="spacingAndGlyphs">Average</text>
<text x="1781" y="592.4" font-size="14" fill="#000" textLength="63" lengthAdjust="spacingAndGlyphs">CPU usage</text>
<rect x="1782" y="381" width="114" height="18" fill="#000"/>
<text x="1803.75" y="394.8" font-size="15" fill="#12aef0" textLength="72.4" lengthAdjust="spacingAndGlyphs" font-weight="bold">72.3 MB/s</text>
<rect x="1782" y="421" width="114" height="18" fill="#000"/>
<text x="1797.9" y="434.75" font-size="15" fill="#12aef0" textLength="82" lengthAdjust="spacingAndGlyphs" font-weight="bold">616.8 MB/s</text>
<rect x="1782" y="460" width="114" height="18" fill="#000"/>
<text x="1797.9" y="473.6" font-size="15" fill="#12aef0" textLength="82" lengthAdjust="spacingAndGlyphs" font-weight="bold">408.1 MB/s</text>
<rect x="1782" y="515" width="114" height="18" fill="#000"/>
<text x="1807.5" y="528.3" font-size="15" fill="#f0f000" textLength="64" lengthAdjust="spacingAndGlyphs" font-weight="bold">0.141 ms</text>
<rect x="1782" y="557.5" width="114" height="18" fill="#000"/>
<text x="1797.9" y="570.7" font-size="15" fill="#ffffff" textLength="82" lengthAdjust="spacingAndGlyphs" font-weight="bold">225.9 MB/s</text>
<rect x="1782" y="599" width="114" height="18" fill="#000"/>
<text x="1819.6" y="612.3" font-size="15" fill="#ffffff" textLength="40.4" lengthAdjust="spacingAndGlyphs" font-weight="bold">10.2%</text>
<rect x="0" y="1030" width="1920" height="50" fill="#212121"/>

<g fill="#fff">
<path d="M20 1046.5 L28.7 1045.3 V1054.5 H20 Z M29.9 1045.1 L40 1043.7 V1054.5 H29.9 Z M20 1055.7 H28.7 V1064.9 L20 1063.7 Z M29.9 1055.7 H40 V1066.5 L29.9 1065.1 Z"/>
</g>
<circle cx="93.5" cy="1051.5" r="6.3" fill="none" stroke="#fff" stroke-width="1.5"/>
<path d="M88.8 1056.2 L80.5 1064.5" stroke="#fff" stroke-width="1.6"/>
<g fill="none" stroke="#fff" stroke-width="1.3">
<path d="M140.5 1045 V1047.5 H154.5 V1045 M140.5 1065 V1062.5 H154.5 V1065"/>
<rect x="141" y="1050" width="13" height="10"/>
<path d="M158.5 1045 V1065"/>
</g>
<rect x="157" y="1051" width="3.5" height="4" fill="#fff"/>
<path d="M199 1048.5 H228 V1069 H199 Z" fill="#fff"/>
<path d="M207.5 1049 V1045.5 Q213.5 1039.5 219.5 1045.5 V1049" fill="none" stroke="#fff" stroke-width="1.6"/>
<rect x="207" y="1052" width="6" height="6" fill="#f25022"/><rect x="214" y="1052" width="6" height="6" fill="#7fba00"/>
<rect x="207" y="1059" width="6" height="6" fill="#00a4ef"/><rect x="214" y="1059" width="6" height="6" fill="#ffb900"/>
<path d="M260.5 1050 L275.7 1042.3 L291 1050 V1066 H260.5 Z" fill="#fff"/>
<path d="M262 1051 L290 1051 L276 1058 L285 1062 Z" fill="#212121"/>
<rect x="323.5" y="1043.5" width="28" height="21" fill="#000" stroke="#d0d0d0" stroke-width="1.2"/>
<rect x="326" y="1046" width="3" height="2" fill="#ccc"/><rect x="331" y="1047" width="6" height="1" fill="#ccc"/>
<path d="M386 1047 L398 1043 L410 1047 L409 1062 L397 1066 L386 1062 Z" fill="#c0c8d8"/>
<path d="M398 1043 L410 1047 L398 1051 L386 1047 Z" fill="#e8ecf4"/>
<text x="389" y="1061" font-size="11" fill="#2040c0" font-family="Liberation Serif">λ</text>
<rect x="403" y="1052" width="4" height="9" fill="#208040"/>
<path d="M448 1046 Q448 1043 451 1043 H458 L461 1046 H473 Q476 1046 476 1049 V1066 H448 Z" fill="#f8d878"/>
<rect x="448" y="1043" width="10" height="3" fill="#e8b840"/>
<path d="M455 1056 H469 V1066 H465 V1060 H459 V1066 H455 Z" fill="#2a9be8"/>
<rect x="513" y="1040" width="22" height="30" fill="#fff"/>
<rect x="515.5" y="1042.5" width="17" height="5" fill="#000"/>
<g fill="#000">
<path d="M516 1052 L520 1052 L516 1056Z M522 1052 L526 1052 L522 1056Z M528 1052 L532 1052 L528 1056Z M516 1058 L520 1058 L516 1062Z M522 1058 L526 1058 L522 1062Z M528 1058 L532 1058 L528 1062Z M516 1064 L520 1064 L516 1068Z M522 1064 L526 1064 L522 1068Z M528 1064 L532 1064 L528 1068Z"/>
</g>
<path d="M586 1055.5 L574.31 1048.75 A13.5 13.5 0 0 1 597.69 1048.75 Z" fill="#db4437"/>
<path d="M586 1055.5 L597.69 1048.75 A13.5 13.5 0 0 1 586 1069 Z" fill="#f4c20d"/>
<path d="M586 1055.5 L586 1069 A13.5 13.5 0 0 1 574.31 1048.75 Z" fill="#0f9d58"/>
<circle cx="586" cy="1055.5" r="6" fill="#fff"/><circle cx="586" cy="1055.5" r="4.8" fill="#4285f4"/>
<rect x="633" y="1040" width="30" height="30" fill="#fff"/>
<circle cx="642" cy="1058" r="4.5" fill="none" stroke="#e8b060" stroke-width="1.2"/>
<circle cx="655" cy="1049.5" r="3" fill="none" stroke="#e8b060" stroke-width="1.2"/>
<rect x="680" y="1030" width="61" height="50" fill="#2e2e2e"/>
<g transform="translate(709,1056) rotate(-40)">
<rect x="-8" y="-11" width="16" height="22" rx="2" fill="#222" stroke="#555" stroke-width="0.8"/>
<rect x="-5" y="5" width="10" height="4" fill="#999"/>
</g>
<circle cx="713" cy="1050.5" r="6.5" fill="#f0c060"/><circle cx="713" cy="1050.5" r="2.2" fill="#b0b0b0"/>
<g transform="translate(772,1053)">
<ellipse cx="0" cy="-2" rx="13" ry="9" transform="rotate(-20)" fill="#f0f0f0" stroke="#d03020" stroke-width="2"/>
<ellipse cx="-1" cy="2" rx="10" ry="4" fill="#888" opacity="0.8"/>
<path d="M-6 -9 L4 8 M6 -9 L-2 8" stroke="#666" stroke-width="1.2"/>
<circle cx="2" cy="11" r="3.5" fill="none" stroke="#2a9be8" stroke-width="2"/>
<circle cx="10" cy="9" r="3.5" fill="none" stroke="#2a9be8" stroke-width="2"/>
</g>
<rect x="561" y="1077" width="51" height="3" fill="#aaa"/>
<rect x="623" y="1077" width="51" height="3" fill="#aaa"/>
<rect x="680" y="1077" width="61" height="3" fill="#bbb"/>
<g fill="none" stroke="#fff" stroke-width="1.3">
<circle cx="1593" cy="1049" r="3.2"/><path d="M1587 1057 Q1589 1052.5 1593 1052.5 Q1597 1052.5 1598 1056"/>
<circle cx="1585.5" cy="1055" r="3.2"/><path d="M1579.5 1064 Q1580.5 1058.5 1585.5 1058.5 Q1590.5 1058.5 1591.5 1064"/>
<path d="M1625 1059.5 L1633 1051.3 L1641 1059.5"/>
<rect x="1684.5" y="1051.5" width="17" height="9"/>
<path d="M1718 1062 Q1718 1050 1730 1049 M1721 1062 Q1721 1053 1730 1052.5 M1724 1062 Q1724 1056 1730 1056"/>
<path d="M1743.5 1051.5 H1747 L1752 1047 V1063 L1747 1058.5 H1743.5 Z"/>
<path d="M1755 1052 Q1757.5 1055 1755 1058 M1758 1049.5 Q1762 1055 1758 1060.5 M1761 1047 Q1766 1055 1761 1063"/>
<path d="M1869.5 1045.5 H1889 V1060.5 H1882 L1879 1064 L1876 1060.5 H1869.5 Z"/>
</g>
<path d="M1653 1061 H1673 Q1674 1054 1668 1054 Q1666 1049 1661 1050 Q1656 1050 1656 1055 Q1652 1056 1653 1061 Z" fill="#fff"/>
<rect x="1701.5" y="1054" width="1.6" height="4" fill="#fff"/>
<rect x="1686" y="1053" width="14" height="6" fill="#fff"/>
<path d="M1683.5 1048 V1052 M1686.5 1048 V1052 M1685 1052 V1056" stroke="#fff" stroke-width="1"/>
<circle cx="1729" cy="1061.5" r="1.6" fill="#fff"/>
<rect x="1914" y="1030" width="1" height="50" fill="#686868"/>

<text x="1794" y="1048.8" font-size="15" fill="#fff" textLength="32.8" lengthAdjust="spacingAndGlyphs">10:51</text>
<text x="1776.7" y="1071.6" font-size="15" fill="#fff" textLength="69.3" lengthAdjust="spacingAndGlyphs">20.10.2018</text>
</svg>
</body></html>
